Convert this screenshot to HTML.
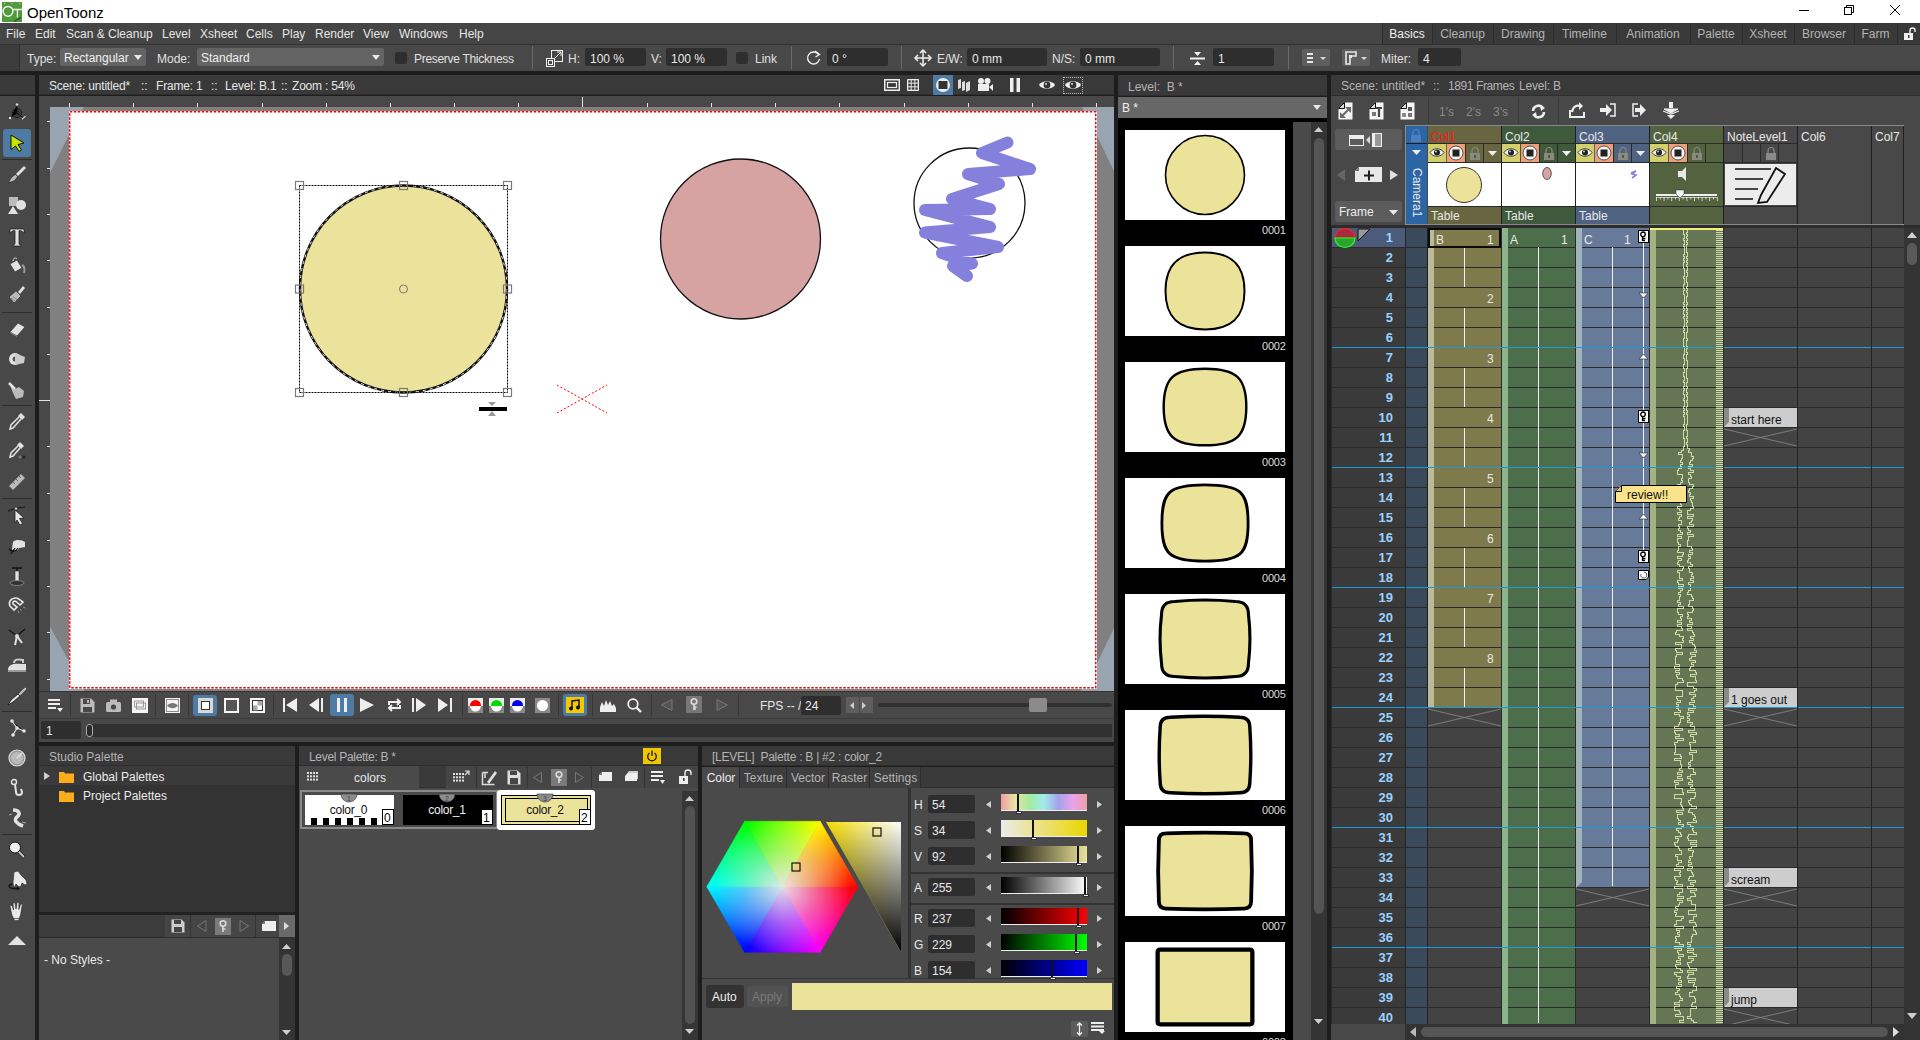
<!DOCTYPE html>
<html><head><meta charset="utf-8"><title>OpenToonz</title>
<style>
html,body{margin:0;padding:0}
body{width:1920px;height:1040px;position:relative;overflow:hidden;background:#1d1d1d;font-family:"Liberation Sans",sans-serif;font-size:12px;color:#e0e0e0}
.a{position:absolute;box-sizing:border-box}
.t{white-space:nowrap;line-height:1}
svg.a{overflow:visible}
</style></head><body>

<div class="a" style="left:0px;top:0px;width:1920px;height:23px;background:#ffffff;"></div><svg class="a" style="left:2px;top:2px;" width="20" height="20" viewBox="0 0 20 20"><rect width="20" height="20" fill="#4f9a3a"/><circle cx="6" cy="9.3" r="4.9" fill="none" stroke="#f6f6f6" stroke-width="1.5"/><path d="M11 7.5H20M15.4 7.5V15.5" stroke="#f2f2f2" stroke-width="1.3" fill="none"/><circle cx="2.6" cy="1.6" r="0.7" fill="#c8c8d0"/><circle cx="9.8" cy="1.6" r="0.7" fill="#c8c8d0"/><circle cx="17.4" cy="1.6" r="0.7" fill="#c8c8d0"/><path d="M12 19.5L19 15.5" stroke="#2f5030" stroke-width="1.4"/></svg><div class="a t" style="left:27px;top:5px;font-size:15px;color:#000000;">OpenToonz</div><div class="a" style="left:1799px;top:10px;width:10px;height:1px;background:#000;"></div><svg class="a" style="left:1844px;top:5px;" width="10" height="10" viewBox="0 0 10 10"><rect x="0.5" y="2.5" width="7" height="7" fill="none" stroke="#000"/><path d="M2.5 2.5V0.5H9.5V7.5H7.5" fill="none" stroke="#000"/></svg><svg class="a" style="left:1890px;top:5px;" width="10" height="10" viewBox="0 0 10 10"><path d="M0 0L10 10M10 0L0 10" stroke="#000" stroke-width="1"/></svg>
<div class="a" style="left:0px;top:23px;width:1920px;height:21px;background:#454545;"></div><div class="a t" style="left:6px;top:28px;font-size:12px;color:#e6e6e6;">File</div><div class="a t" style="left:35px;top:28px;font-size:12px;color:#e6e6e6;">Edit</div><div class="a t" style="left:66px;top:28px;font-size:12px;color:#e6e6e6;">Scan &amp; Cleanup</div><div class="a t" style="left:162px;top:28px;font-size:12px;color:#e6e6e6;">Level</div><div class="a t" style="left:200px;top:28px;font-size:12px;color:#e6e6e6;">Xsheet</div><div class="a t" style="left:246px;top:28px;font-size:12px;color:#e6e6e6;">Cells</div><div class="a t" style="left:282px;top:28px;font-size:12px;color:#e6e6e6;">Play</div><div class="a t" style="left:315px;top:28px;font-size:12px;color:#e6e6e6;">Render</div><div class="a t" style="left:363px;top:28px;font-size:12px;color:#e6e6e6;">View</div><div class="a t" style="left:399px;top:28px;font-size:12px;color:#e6e6e6;">Windows</div><div class="a t" style="left:459px;top:28px;font-size:12px;color:#e6e6e6;">Help</div><div class="a" style="left:1382px;top:23px;width:50px;height:21px;background:#3e3e3e;border-left:1px solid #2c2c2c;"></div><div class="a t" style="left:1382px;top:28px;font-size:12px;color:#f0f0f0;width:50px;text-align:center;">Basics</div><div class="a" style="left:1432px;top:23px;width:61px;height:21px;background:#393939;border-left:1px solid #2c2c2c;"></div><div class="a t" style="left:1432px;top:28px;font-size:12px;color:#b4b4b4;width:61px;text-align:center;">Cleanup</div><div class="a" style="left:1493px;top:23px;width:60px;height:21px;background:#393939;border-left:1px solid #2c2c2c;"></div><div class="a t" style="left:1493px;top:28px;font-size:12px;color:#b4b4b4;width:60px;text-align:center;">Drawing</div><div class="a" style="left:1553px;top:23px;width:63px;height:21px;background:#393939;border-left:1px solid #2c2c2c;"></div><div class="a t" style="left:1553px;top:28px;font-size:12px;color:#b4b4b4;width:63px;text-align:center;">Timeline</div><div class="a" style="left:1616px;top:23px;width:74px;height:21px;background:#393939;border-left:1px solid #2c2c2c;"></div><div class="a t" style="left:1616px;top:28px;font-size:12px;color:#b4b4b4;width:74px;text-align:center;">Animation</div><div class="a" style="left:1690px;top:23px;width:52px;height:21px;background:#393939;border-left:1px solid #2c2c2c;"></div><div class="a t" style="left:1690px;top:28px;font-size:12px;color:#b4b4b4;width:52px;text-align:center;">Palette</div><div class="a" style="left:1742px;top:23px;width:52px;height:21px;background:#393939;border-left:1px solid #2c2c2c;"></div><div class="a t" style="left:1742px;top:28px;font-size:12px;color:#b4b4b4;width:52px;text-align:center;">Xsheet</div><div class="a" style="left:1794px;top:23px;width:60px;height:21px;background:#393939;border-left:1px solid #2c2c2c;"></div><div class="a t" style="left:1794px;top:28px;font-size:12px;color:#b4b4b4;width:60px;text-align:center;">Browser</div><div class="a" style="left:1854px;top:23px;width:43px;height:21px;background:#393939;border-left:1px solid #2c2c2c;"></div><div class="a t" style="left:1854px;top:28px;font-size:12px;color:#b4b4b4;width:43px;text-align:center;">Farm</div><div class="a" style="left:1897px;top:23px;width:23px;height:21px;background:#393939;border-left:1px solid #2c2c2c;"></div><svg class="a" style="left:1903px;top:27px;" width="14" height="14" viewBox="0 0 14 14"><rect x="1" y="6" width="9" height="7" fill="#f0f0f0"/><path d="M7 6V3.5A2.5 2.5 0 0 1 12 3.5V5" fill="none" stroke="#f0f0f0" stroke-width="1.4"/><rect x="5" y="8" width="1.5" height="3" fill="#393939"/></svg>
<div class="a" style="left:0px;top:44px;width:1920px;height:27px;background:#484848;border-top:1px solid #333;"></div><div class="a" style="left:0px;top:45px;width:20px;height:26px;background:#3c3c3c;border-right:1px solid #2e2e2e;"></div><div class="a t" style="left:27px;top:53px;font-size:12px;color:#e0e0e0;">Type:</div><div class="a" style="left:60px;top:48px;width:86px;height:18px;background:#646464;border-radius:2px;"></div><div class="a t" style="left:64px;top:52px;font-size:12px;color:#f0f0f0;">Rectangular</div><svg class="a" style="left:134px;top:55px;" width="8" height="5" viewBox="0 0 8 5"><path d="M0 0H8L4 5Z" fill="#e8e8e8"/></svg><div class="a t" style="left:157px;top:53px;font-size:12px;color:#e0e0e0;">Mode:</div><div class="a" style="left:197px;top:48px;width:187px;height:18px;background:#646464;border-radius:2px;"></div><div class="a t" style="left:201px;top:52px;font-size:12px;color:#f0f0f0;">Standard</div><svg class="a" style="left:372px;top:55px;" width="8" height="5" viewBox="0 0 8 5"><path d="M0 0H8L4 5Z" fill="#e8e8e8"/></svg><div class="a" style="left:395px;top:52px;width:12px;height:12px;background:#2e2e2e;border-radius:2px;"></div><div class="a t" style="left:414px;top:53px;font-size:12px;color:#e0e0e0;letter-spacing:-0.3px;">Preserve Thickness</div><div class="a" style="left:532px;top:46px;width:1px;height:23px;background:#6a6a6a;"></div><div class="a" style="left:791px;top:46px;width:1px;height:23px;background:#6a6a6a;"></div><div class="a" style="left:901px;top:46px;width:1px;height:23px;background:#6a6a6a;"></div><div class="a" style="left:1173px;top:46px;width:1px;height:23px;background:#6a6a6a;"></div><div class="a" style="left:1288px;top:46px;width:1px;height:23px;background:#6a6a6a;"></div><svg class="a" style="left:546px;top:50px;" width="17" height="17" viewBox="0 0 17 17"><rect x="5.5" y="0.5" width="11" height="11" fill="none" stroke="#f0f0f0"/><path d="M7 10L15 2M11 2H15V6" stroke="#f0f0f0" fill="none"/><rect x="0.5" y="8.5" width="8" height="8" fill="#484848" stroke="#f0f0f0"/><rect x="2.5" y="10.5" width="4" height="4" fill="none" stroke="#f0f0f0"/></svg><div class="a t" style="left:568px;top:53px;font-size:12px;color:#e0e0e0;">H:</div><div class="a" style="left:585px;top:48px;width:61px;height:18px;background:#2e2e2e;border-radius:2px;"></div><div class="a t" style="left:590px;top:53px;font-size:12px;color:#e8e8e8;">100 %</div><div class="a t" style="left:651px;top:53px;font-size:12px;color:#e0e0e0;">V:</div><div class="a" style="left:666px;top:48px;width:61px;height:18px;background:#2e2e2e;border-radius:2px;"></div><div class="a t" style="left:671px;top:53px;font-size:12px;color:#e8e8e8;">100 %</div><div class="a" style="left:736px;top:52px;width:12px;height:12px;background:#2e2e2e;border-radius:2px;"></div><div class="a t" style="left:755px;top:53px;font-size:12px;color:#e0e0e0;">Link</div><svg class="a" style="left:806px;top:50px;" width="15" height="16" viewBox="0 0 15 16"><path d="M12.5 4.5A6 6 0 1 0 13.5 9" fill="none" stroke="#f0f0f0" stroke-width="1.4"/><path d="M9 1L13.5 4.5L9.5 7" fill="none" stroke="#f0f0f0" stroke-width="1.3"/></svg><div class="a" style="left:827px;top:48px;width:61px;height:18px;background:#2e2e2e;border-radius:2px;"></div><div class="a t" style="left:832px;top:53px;font-size:12px;color:#e8e8e8;">0 °</div><svg class="a" style="left:914px;top:49px;" width="18" height="18" viewBox="0 0 18 18"><path d="M9 1V17M1 9H17" stroke="#f0f0f0" stroke-width="1.5"/><path d="M6 4L9 1L12 4M6 14L9 17L12 14M4 6L1 9L4 12M14 6L17 9L14 12" fill="none" stroke="#f0f0f0" stroke-width="1.5"/></svg><div class="a t" style="left:937px;top:53px;font-size:12px;color:#e0e0e0;">E/W:</div><div class="a" style="left:967px;top:48px;width:80px;height:18px;background:#2e2e2e;border-radius:2px;"></div><div class="a t" style="left:972px;top:53px;font-size:12px;color:#e8e8e8;">0 mm</div><div class="a t" style="left:1052px;top:53px;font-size:12px;color:#e0e0e0;">N/S:</div><div class="a" style="left:1080px;top:48px;width:80px;height:18px;background:#2e2e2e;border-radius:2px;"></div><div class="a t" style="left:1085px;top:53px;font-size:12px;color:#e8e8e8;">0 mm</div><svg class="a" style="left:1189px;top:50px;" width="17" height="17" viewBox="0 0 17 17"><path d="M1 8.5H16" stroke="#f0f0f0" stroke-width="2"/><path d="M5 2H12L8.5 6Z M5 15H12L8.5 11Z" fill="#f0f0f0"/></svg><div class="a" style="left:1213px;top:48px;width:61px;height:18px;background:#2e2e2e;border-radius:2px;"></div><div class="a t" style="left:1218px;top:53px;font-size:12px;color:#e8e8e8;">1</div><div class="a" style="left:1302px;top:49px;width:28px;height:17px;background:#5e5e5e;border-radius:2px;"></div><svg class="a" style="left:1307px;top:53px;" width="20" height="10" viewBox="0 0 20 10"><path d="M0 1H6M0 5H6M0 9H6" stroke="#e8e8e8" stroke-width="2"/><path d="M13 4H19L16 7Z" fill="#d8d8d8"/></svg><div class="a" style="left:1342px;top:49px;width:28px;height:17px;background:#5e5e5e;border-radius:2px;"></div><svg class="a" style="left:1345px;top:51px;" width="22" height="14" viewBox="0 0 22 14"><path d="M1 13V1H11V5H5V13Z" fill="none" stroke="#e8e8e8" stroke-width="1.6"/><rect x="4" y="4" width="3" height="3" fill="#e8e8e8"/><path d="M16 6H22L19 9Z" fill="#d8d8d8"/></svg><div class="a t" style="left:1381px;top:53px;font-size:12px;color:#e0e0e0;">Miter:</div><div class="a" style="left:1418px;top:48px;width:43px;height:18px;background:#2e2e2e;border-radius:2px;"></div><div class="a t" style="left:1423px;top:53px;font-size:12px;color:#e8e8e8;">4</div>
<div class="a" style="left:0px;top:75px;width:35px;height:20px;background:#3a3a3a;border-bottom:1px solid #2e2e2e;"></div><div class="a" style="left:0px;top:96px;width:35px;height:944px;background:#484848;"></div><div class="a" style="left:3px;top:129px;width:28px;height:28px;background:#4d7ba3;border-radius:3px;"></div><div class="a" style="left:2px;top:159px;width:30px;height:1px;background:#2e2e2e;"></div><div class="a" style="left:2px;top:312px;width:30px;height:1px;background:#2e2e2e;"></div><div class="a" style="left:2px;top:405px;width:30px;height:1px;background:#2e2e2e;"></div><div class="a" style="left:2px;top:498px;width:30px;height:1px;background:#2e2e2e;"></div><div class="a" style="left:2px;top:711px;width:30px;height:1px;background:#2e2e2e;"></div><div class="a" style="left:2px;top:834px;width:30px;height:1px;background:#2e2e2e;"></div><svg class="a" style="left:7px;top:102px;" width="20" height="20" viewBox="0 0 20 20"><circle cx="10" cy="11" r="4.5" fill="none" stroke="#151515" stroke-width="1"/><circle cx="10" cy="11" r="2.2" fill="none" stroke="#151515" stroke-width="0.8"/><path d="M10 3V11L3.5 16M10 11L16.5 16" stroke="#151515" stroke-width="1"/><circle cx="10" cy="2.5" r="1.7" fill="#ddd" stroke="#222" stroke-width="0.6"/><rect x="1.5" y="14.5" width="3" height="3" fill="#ddd" stroke="#222" stroke-width="0.6"/><path d="M14 17L18 13.5L19.5 14.5L15.5 18Z" fill="#ddd" stroke="#222" stroke-width="0.6"/></svg><svg class="a" style="left:7px;top:133px;" width="20" height="20" viewBox="0 0 20 20"><path d="M4 2L17 10L11 11.5L14.5 17L12 18.5L8.5 13L4 16.5Z" fill="#c6e600" stroke="#111" stroke-width="1"/></svg><svg class="a" style="left:7px;top:164px;" width="20" height="20" viewBox="0 0 20 20"><path d="M17 2L19 4L11 12L9 10Z" fill="#e2e2e2"/><path d="M8.5 10.5L10.5 12.5C9 16 6 18 1.5 18.5C3 15.5 5 12 8.5 10.5Z" fill="#bbb" stroke="#222" stroke-width="0.6"/></svg><svg class="a" style="left:7px;top:195px;" width="20" height="20" viewBox="0 0 20 20"><rect x="2" y="2" width="9" height="9" fill="#bbb"/><circle cx="14" cy="10" r="5" fill="#e2e2e2"/><path d="M1 19L6 11L11 19Z" fill="#e2e2e2"/></svg><svg class="a" style="left:7px;top:227px;" width="20" height="20" viewBox="0 0 20 20"><path d="M3 2H17V6H16C15.5 4 15 3.7 12 3.7V16.5C12 17.5 12.5 17.8 14 17.8V19H6V17.8C7.5 17.8 8 17.5 8 16.5V3.7C5 3.7 4.5 4 4 6H3Z" fill="#e2e2e2" stroke="#111" stroke-width="0.7"/></svg><svg class="a" style="left:7px;top:256px;" width="20" height="20" viewBox="0 0 20 20"><path d="M3 8L10 4L15 12L8 16Z" fill="#e2e2e2" stroke="#222" stroke-width="0.6"/><path d="M6 5C6 2 9 1 10 3" fill="none" stroke="#e2e2e2"/><path d="M15 9C17 10 18 13 17 17" stroke="#999" stroke-width="2" fill="none"/></svg><svg class="a" style="left:7px;top:285px;" width="20" height="20" viewBox="0 0 20 20"><path d="M16 1L18 3L13 9L11 7Z" fill="#e2e2e2"/><path d="M2 12L9 6L14 11L7 18Z" fill="#bbb" stroke="#222" stroke-width="0.6"/><path d="M4 13L9 17M6 11.5L11 15.5" stroke="#777" stroke-width="0.8"/></svg><svg class="a" style="left:7px;top:319px;" width="20" height="20" viewBox="0 0 20 20"><path d="M3 13L11 4L18 8L10 17Z" fill="#e2e2e2" stroke="#222" stroke-width="0.6"/><path d="M3 13L10 17L10 18L3 14Z" fill="#888"/></svg><svg class="a" style="left:7px;top:349px;" width="20" height="20" viewBox="0 0 20 20"><ellipse cx="8" cy="10" rx="6" ry="6" fill="#e2e2e2"/><ellipse cx="8" cy="10" rx="2.5" ry="2.5" fill="#555"/><path d="M8 4L18 8L17 14L8 16" fill="#ccc"/></svg><svg class="a" style="left:7px;top:380px;" width="20" height="20" viewBox="0 0 20 20"><path d="M2 3L8 9L12 7L17 11L16 17L9 19L6 13Z" fill="#bbb"/><path d="M2 3L8 9" stroke="#e2e2e2" stroke-width="2.5"/></svg><svg class="a" style="left:7px;top:411px;" width="20" height="20" viewBox="0 0 20 20"><path d="M14 2L18 6L15 9L11 5Z" fill="#e2e2e2"/><path d="M12 6L4 14L3 18L6 17L14 8" fill="none" stroke="#e2e2e2" stroke-width="1.5"/></svg><svg class="a" style="left:7px;top:441px;" width="20" height="20" viewBox="0 0 20 20"><path d="M13 1L17 5L14 8L10 4Z" fill="#e2e2e2"/><path d="M11 5L4 12L3 16L6 15L13 7" fill="none" stroke="#e2e2e2" stroke-width="1.5"/><circle cx="13" cy="16" r="1.6" fill="#777"/><circle cx="17" cy="16" r="1.6" fill="#222"/></svg><svg class="a" style="left:7px;top:472px;" width="20" height="20" viewBox="0 0 20 20"><path d="M2 14L14 2L18 6L6 18Z" fill="#bbb" stroke="#777" stroke-width="0.6"/><path d="M6 10L8 12M9 7L11 9M12 4L14 6" stroke="#666"/></svg><svg class="a" style="left:7px;top:506px;" width="20" height="20" viewBox="0 0 20 20"><path d="M1 5L9 2L18 1" fill="none" stroke="#151515" stroke-width="1.2"/><circle cx="9" cy="2.5" r="1.5" fill="#ddd" stroke="#151515" stroke-width="0.6"/><path d="M8 4L17 12L12.5 12.5L15.5 17.5L13 19L10 14L8 17Z" fill="#e6e6e6" stroke="#151515" stroke-width="0.7"/></svg><svg class="a" style="left:7px;top:536px;" width="20" height="20" viewBox="0 0 20 20"><path d="M6 6C9 3 15 4 18 6L18 11L12 12C10 16 6 16 5 13Z" fill="#e2e2e2"/><path d="M2 13C5 16 9 16 11 12M4 18L8 12" stroke="#111" stroke-width="1.3" fill="none"/></svg><svg class="a" style="left:7px;top:566px;" width="20" height="20" viewBox="0 0 20 20"><path d="M5 2H15M10 2V5" stroke="#111" stroke-width="1.4"/><rect x="8" y="5" width="4" height="10" fill="#e2e2e2" stroke="#333" stroke-width="0.6"/><ellipse cx="10" cy="17" rx="7" ry="2.5" fill="#333" stroke="#aaa" stroke-width="0.6"/></svg><svg class="a" style="left:7px;top:595px;" width="20" height="20" viewBox="0 0 20 20"><path d="M9 3C4 3 1 7 3 11L7 15L10 12L6 9C5 7 7 5.5 9 6.5L13 10L16 7L11 3.5C10.5 3.2 9.8 3 9 3Z" fill="none" stroke="#e6e6e6" stroke-width="1.6"/><path d="M13 14L15 16M11 15.5L12 18.5M16 12L18.5 13" stroke="#999" stroke-width="0.8"/></svg><svg class="a" style="left:7px;top:626px;" width="20" height="20" viewBox="0 0 20 20"><path d="M2 4L10 10L18 3" stroke="#111" stroke-width="1.2" fill="none"/><path d="M10 10L8 19M10 10L15 17" stroke="#e2e2e2" stroke-width="2"/><circle cx="10" cy="10" r="2" fill="#ddd"/></svg><svg class="a" style="left:7px;top:655px;" width="20" height="20" viewBox="0 0 20 20"><path d="M1 15C1 9 8 8 14 9L19 9L19 15Z" fill="#e2e2e2"/><path d="M7 8C7 4 12 4 16 5L16 8" fill="none" stroke="#ccc" stroke-width="2"/><rect x="1" y="15" width="18" height="2" fill="#999"/></svg><svg class="a" style="left:7px;top:686px;" width="20" height="20" viewBox="0 0 20 20"><path d="M18 1L20 3L13 10L11 8Z" fill="#bbb" stroke="#222" stroke-width="0.5"/><path d="M11 8L13 10L6 16L1 19L4 14Z" fill="#e6e6e6" stroke="#111" stroke-width="0.8"/></svg><svg class="a" style="left:7px;top:718px;" width="20" height="20" viewBox="0 0 20 20"><path d="M5 3L10 10L17 13M10 10L6 17" stroke="#e2e2e2" stroke-width="1.2"/><circle cx="5" cy="3" r="1.8" fill="#e2e2e2"/><circle cx="10" cy="10" r="1.8" fill="#e2e2e2"/><circle cx="17" cy="13" r="1.8" fill="#e2e2e2"/><circle cx="6" cy="17" r="1.8" fill="#e2e2e2"/></svg><svg class="a" style="left:7px;top:748px;" width="20" height="20" viewBox="0 0 20 20"><circle cx="10" cy="10" r="8" fill="#999" stroke="#ddd" stroke-width="1.2"/><circle cx="10" cy="10" r="6" fill="#bbb"/><path d="M10 10L15 5" stroke="#e2e2e2" stroke-width="1.5"/></svg><svg class="a" style="left:7px;top:778px;" width="20" height="20" viewBox="0 0 20 20"><circle cx="7" cy="4" r="2.5" fill="none" stroke="#e2e2e2" stroke-width="1.4"/><path d="M8 6L9 14C9 18 15 18 15 14L14 11" fill="none" stroke="#e2e2e2" stroke-width="2"/></svg><svg class="a" style="left:7px;top:808px;" width="20" height="20" viewBox="0 0 20 20"><path d="M6 2C12 2 14 6 10 9C6 12 10 16 16 18" fill="none" stroke="#e2e2e2" stroke-width="3.5"/><path d="M2 7L5 6M15 14L19 15" stroke="#aaa"/></svg><svg class="a" style="left:7px;top:840px;" width="20" height="20" viewBox="0 0 20 20"><path d="M11 11L17.5 17.5" stroke="#222" stroke-width="3.2"/><path d="M11 11L17 17" stroke="#ccc" stroke-width="1.8"/><circle cx="8" cy="7.5" r="5.5" fill="#eee" stroke="#111" stroke-width="1"/></svg><svg class="a" style="left:7px;top:870px;" width="20" height="20" viewBox="0 0 20 20"><path d="M7 2L11 1L14 5L19 10L20 14L18 15L15 13L14 16L12 17L9 14L7 18L6 13Z" fill="#e8e8e8" stroke="#222" stroke-width="0.6"/><path d="M5 14C1 15 1 18 6 18.5L11 18.5" fill="none" stroke="#111" stroke-width="1.3"/><path d="M10 16.5L13 18.5L10 20.5Z" fill="#111"/></svg><svg class="a" style="left:7px;top:901px;" width="20" height="20" viewBox="0 0 20 20"><path d="M4 10L3 5C3 4 5 4 5.2 5L6.5 9L6 2.5C6 1.5 8 1.5 8.2 2.5L9 8L10 1.8C10.2 0.8 12 1 12 2L11.8 8.5L13.5 3.5C14 2.5 15.5 3 15.3 4L14 11C14 13 13 16 12 18H7C5.5 16 4.5 13 4 10Z" fill="#e8e8e8" stroke="#222" stroke-width="0.6"/><rect x="7" y="17.5" width="5" height="2" fill="#ddd" stroke="#222" stroke-width="0.5"/></svg><svg class="a" style="left:7px;top:929px;" width="20" height="20" viewBox="0 0 20 20"><path d="M1 16H19L10 7Z" fill="#e2e2e2"/></svg>
<div class="a" style="left:39px;top:75px;width:1075px;height:20px;background:#393939;border-bottom:1px solid #2e2e2e;"></div><div class="a t" style="left:49px;top:80px;font-size:12px;color:#e6e6e6;letter-spacing:-0.2px;">Scene: untitled*</div><div class="a t" style="left:141px;top:80px;font-size:12px;color:#e6e6e6;letter-spacing:-0.2px;">::</div><div class="a t" style="left:156px;top:80px;font-size:12px;color:#e6e6e6;letter-spacing:-0.2px;">Frame: 1</div><div class="a t" style="left:211px;top:80px;font-size:12px;color:#e6e6e6;letter-spacing:-0.2px;">::</div><div class="a t" style="left:225px;top:80px;font-size:12px;color:#e6e6e6;letter-spacing:-0.2px;">Level: B.1</div><div class="a t" style="left:281px;top:80px;font-size:12px;color:#e6e6e6;letter-spacing:-0.2px;">::</div><div class="a t" style="left:292px;top:80px;font-size:12px;color:#e6e6e6;letter-spacing:-0.2px;">Zoom : 54%</div><svg class="a" style="left:884px;top:79px;" width="16" height="12" viewBox="0 0 16 12"><rect x="0.75" y="0.75" width="14.5" height="10.5" fill="none" stroke="#eee" stroke-width="1.5"/><rect x="3.5" y="3.5" width="9" height="5" fill="none" stroke="#eee" stroke-width="1.2"/></svg><svg class="a" style="left:907px;top:79px;" width="12" height="12" viewBox="0 0 12 12"><path d="M0.5 0.5H11.5V11.5H0.5Z M4.17 0.5V11.5 M7.83 0.5V11.5 M0.5 4.17H11.5 M0.5 7.83H11.5" fill="none" stroke="#eee" stroke-width="1"/><rect x="1" y="1" width="10" height="10" fill="none" stroke="#eee" stroke-width="0.6" stroke-dasharray="0"/></svg><div class="a" style="left:933px;top:75px;width:20px;height:20px;background:#4d7ba3;"></div><svg class="a" style="left:935px;top:77px;" width="16" height="16" viewBox="0 0 16 16"><circle cx="8" cy="8" r="7" fill="#eee"/><rect x="3.5" y="4" width="9" height="8" fill="#333"/></svg><svg class="a" style="left:957px;top:78px;" width="15" height="14" viewBox="0 0 15 14"><path d="M1 2L4 1V10L1 11Z M5 4L8 3V12L5 13Z M9 5L13 3V12L9 14Z" fill="#ddd"/></svg><svg class="a" style="left:977px;top:78px;" width="16" height="14" viewBox="0 0 16 14"><circle cx="4" cy="3" r="3" fill="#eee"/><circle cx="10.5" cy="3" r="3" fill="#eee"/><rect x="1" y="6" width="11" height="7" fill="#eee"/><path d="M12 9L16 6V13Z" fill="#eee"/></svg><svg class="a" style="left:1010px;top:78px;" width="10" height="14" viewBox="0 0 10 14"><rect x="0" y="0" width="3.5" height="14" fill="#eee"/><rect x="6.5" y="0" width="3.5" height="14" fill="#eee"/></svg><svg class="a" style="left:1038px;top:79px;" width="18" height="12" viewBox="0 0 18 12"><path d="M1 6C4 1 14 1 17 6C14 11 4 11 1 6Z" fill="#f0f0f0"/><circle cx="9" cy="6" r="3.4" fill="#333"/><circle cx="8" cy="5" r="1" fill="#ddd"/></svg><div class="a" style="left:1063px;top:77px;width:20px;height:17px;border:1px dotted #bbb;"></div><svg class="a" style="left:1064px;top:79px;" width="18" height="12" viewBox="0 0 18 12"><path d="M1 6C4 1 14 1 17 6C14 11 4 11 1 6Z" fill="#f0f0f0"/><circle cx="9" cy="6" r="3.4" fill="#333"/><circle cx="8" cy="5" r="1" fill="#ddd"/></svg><div class="a" style="left:39px;top:96px;width:1075px;height:11px;background:#484848;"></div><div class="a" style="left:39px;top:107px;width:11px;height:585px;background:#484848;"></div><div class="a" style="left:69px;top:103px;width:1px;height:4px;background:#e6e6e6;"></div><div class="a" style="left:133px;top:103px;width:1px;height:4px;background:#e6e6e6;"></div><div class="a" style="left:197px;top:103px;width:1px;height:4px;background:#e6e6e6;"></div><div class="a" style="left:262px;top:103px;width:1px;height:4px;background:#e6e6e6;"></div><div class="a" style="left:326px;top:103px;width:1px;height:4px;background:#e6e6e6;"></div><div class="a" style="left:390px;top:103px;width:1px;height:4px;background:#e6e6e6;"></div><div class="a" style="left:454px;top:103px;width:1px;height:4px;background:#e6e6e6;"></div><div class="a" style="left:518px;top:103px;width:1px;height:4px;background:#e6e6e6;"></div><div class="a" style="left:582px;top:97px;width:1px;height:10px;background:#e6e6e6;"></div><div class="a" style="left:647px;top:103px;width:1px;height:4px;background:#e6e6e6;"></div><div class="a" style="left:711px;top:103px;width:1px;height:4px;background:#e6e6e6;"></div><div class="a" style="left:775px;top:103px;width:1px;height:4px;background:#e6e6e6;"></div><div class="a" style="left:839px;top:103px;width:1px;height:4px;background:#e6e6e6;"></div><div class="a" style="left:904px;top:103px;width:1px;height:4px;background:#e6e6e6;"></div><div class="a" style="left:968px;top:103px;width:1px;height:4px;background:#e6e6e6;"></div><div class="a" style="left:1032px;top:103px;width:1px;height:4px;background:#e6e6e6;"></div><div class="a" style="left:1096px;top:103px;width:1px;height:4px;background:#e6e6e6;"></div><div class="a" style="left:47px;top:121px;width:3px;height:1px;background:#e6e6e6;"></div><div class="a" style="left:47px;top:168px;width:3px;height:1px;background:#e6e6e6;"></div><div class="a" style="left:47px;top:214px;width:3px;height:1px;background:#e6e6e6;"></div><div class="a" style="left:47px;top:260px;width:3px;height:1px;background:#e6e6e6;"></div><div class="a" style="left:47px;top:307px;width:3px;height:1px;background:#e6e6e6;"></div><div class="a" style="left:47px;top:354px;width:3px;height:1px;background:#e6e6e6;"></div><div class="a" style="left:39px;top:400px;width:11px;height:1px;background:#e6e6e6;"></div><div class="a" style="left:47px;top:446px;width:3px;height:1px;background:#e6e6e6;"></div><div class="a" style="left:47px;top:493px;width:3px;height:1px;background:#e6e6e6;"></div><div class="a" style="left:47px;top:540px;width:3px;height:1px;background:#e6e6e6;"></div><div class="a" style="left:47px;top:586px;width:3px;height:1px;background:#e6e6e6;"></div><div class="a" style="left:47px;top:632px;width:3px;height:1px;background:#e6e6e6;"></div><div class="a" style="left:47px;top:679px;width:3px;height:1px;background:#e6e6e6;"></div><div class="a" style="left:50px;top:107px;width:1064px;height:585px;background:#808080;"></div><svg class="a" style="left:50px;top:107px;" width="1064" height="585" viewBox="0 0 1064 585"><path d="M0 0H34L32 4H19V28L0 66Z" fill="#98a4b0"/><path d="M1064 0H1032L1034 4H1047V29L1064 64Z" fill="#98a4b0"/><path d="M0 519.5L19 554.5V582H33L35 584H0Z" fill="#98a4b0"/><path d="M1064 521L1047 556V582H1032L1030 584H1064Z" fill="#98a4b0"/></svg><div class="a" style="left:69px;top:111px;width:1028px;height:578px;background:#ffffff;"></div><svg class="a" style="left:69px;top:111px;" width="1028" height="578" viewBox="0 0 1028 578"><rect x="0.75" y="0.75" width="1026" height="576" fill="none" stroke="#ff0000" stroke-width="1.5" stroke-dasharray="2.5 1.5"/></svg><svg class="a" style="left:0px;top:0px;pointer-events:none;" width="1920" height="1040" viewBox="0 0 1920 1040"><circle cx="740.5" cy="239" r="80" fill="#d6a2a2" stroke="#111" stroke-width="1.3"/><ellipse cx="969.5" cy="203" rx="55.5" ry="55" fill="none" stroke="#111" stroke-width="1.3"/><path d="M1007.5 142.5 L982 153 L1030 169 L968 174 L999 184 L952 199 L990 209 L925 210 L990 227 L925 232.5 L998 247 L942 253 L972 263.5 L953 266 L967 276" fill="none" stroke="#8480dc" stroke-width="12" stroke-linecap="round" stroke-linejoin="round"/><circle cx="403.5" cy="289" r="103.5" fill="#ebe39c" stroke="#111" stroke-width="2.4"/><circle cx="403.5" cy="289" r="103.5" fill="none" stroke="#fff" stroke-width="0.9" stroke-dasharray="3 4"/><rect x="299.5" y="185.5" width="208" height="207" fill="none" stroke="#000" stroke-width="1" stroke-dasharray="2 1"/><rect x="295.5" y="181.5" width="8" height="8" fill="none" stroke="#7a7a7a" stroke-width="1.2"/><rect x="295.5" y="285" width="8" height="8" fill="none" stroke="#7a7a7a" stroke-width="1.2"/><rect x="295.5" y="388.5" width="8" height="8" fill="none" stroke="#7a7a7a" stroke-width="1.2"/><rect x="399.5" y="181.5" width="8" height="8" fill="none" stroke="#7a7a7a" stroke-width="1.2"/><rect x="399.5" y="388.5" width="8" height="8" fill="none" stroke="#7a7a7a" stroke-width="1.2"/><rect x="503.5" y="181.5" width="8" height="8" fill="none" stroke="#7a7a7a" stroke-width="1.2"/><rect x="503.5" y="285" width="8" height="8" fill="none" stroke="#7a7a7a" stroke-width="1.2"/><rect x="503.5" y="388.5" width="8" height="8" fill="none" stroke="#7a7a7a" stroke-width="1.2"/><circle cx="403.5" cy="289" r="4" fill="none" stroke="#777" stroke-width="1"/><rect x="479" y="407" width="28" height="4" fill="#000"/><path d="M488 402H496L492 406Z M488 416H496L492 411Z" fill="#999"/><path d="M557 385L607 413M557 413L607 385" stroke="#ff0000" stroke-width="1" stroke-dasharray="2 2"/></svg><div class="a" style="left:39px;top:691px;width:1075px;height:1px;background:#333;"></div><div class="a" style="left:39px;top:692px;width:1075px;height:26px;background:#484848;"></div><div class="a" style="left:70px;top:694px;width:1px;height:22px;background:#363636;"></div><div class="a" style="left:155px;top:694px;width:1px;height:22px;background:#363636;"></div><div class="a" style="left:188px;top:694px;width:1px;height:22px;background:#363636;"></div><div class="a" style="left:273px;top:694px;width:1px;height:22px;background:#363636;"></div><div class="a" style="left:462px;top:694px;width:1px;height:22px;background:#363636;"></div><div class="a" style="left:558px;top:694px;width:1px;height:22px;background:#363636;"></div><div class="a" style="left:592px;top:694px;width:1px;height:22px;background:#363636;"></div><div class="a" style="left:651px;top:694px;width:1px;height:22px;background:#363636;"></div><div class="a" style="left:738px;top:694px;width:1px;height:22px;background:#363636;"></div><svg class="a" style="left:47px;top:698px;" width="17" height="15" viewBox="0 0 17 15"><path d="M1 2H13M1 6H13M1 10H9" stroke="#eee" stroke-width="2"/><path d="M10 10H16L13 14Z" fill="#eee"/></svg><svg class="a" style="left:80px;top:698px;" width="15" height="15" viewBox="0 0 15 15"><path d="M0.5 0.5H11L14.5 4V14.5H0.5Z" fill="#bbb"/><rect x="3" y="1" width="7" height="5" fill="#484848"/><rect x="7" y="2" width="2" height="3" fill="#bbb"/><rect x="3" y="9" width="9" height="5" fill="#484848"/></svg><svg class="a" style="left:106px;top:699px;" width="15" height="13" viewBox="0 0 15 13"><rect x="0" y="3" width="15" height="10" rx="1.5" fill="#bbb"/><rect x="4" y="0.5" width="7" height="3" fill="#bbb"/><circle cx="7.5" cy="8" r="2.6" fill="#484848"/></svg><svg class="a" style="left:132px;top:698px;" width="16" height="15" viewBox="0 0 16 15"><rect x="0" y="0" width="16" height="15" fill="#f4f4f4"/><rect x="2.5" y="3" width="9" height="6" fill="none" stroke="#999"/><rect x="4.5" y="5" width="9" height="6" fill="none" stroke="#999"/></svg><svg class="a" style="left:165px;top:698px;" width="15" height="15" viewBox="0 0 15 15"><rect x="0" y="0" width="15" height="15" fill="#f4f4f4"/><rect x="1.5" y="1.5" width="12" height="12" fill="none" stroke="#222" stroke-dasharray="1 1"/><path d="M2 7.5C5 4 10 4 13 7.5C10 11 5 11 2 7.5Z" fill="#777"/></svg><div class="a" style="left:193px;top:695px;width:24px;height:21px;background:#4d7ba3;border-radius:3px;"></div><div class="a" style="left:198px;top:698px;width:15px;height:15px;background:#d8d8d8;"></div><div class="a" style="left:201px;top:701px;width:9px;height:9px;background:#fff;border:1px solid #333;"></div><div class="a" style="left:224px;top:698px;width:15px;height:15px;background:#f4f4f4;"></div><div class="a" style="left:226px;top:700px;width:11px;height:11px;background:#555;"></div><div class="a" style="left:250px;top:698px;width:15px;height:15px;background:#f4f4f4;"></div><svg class="a" style="left:252px;top:700px;" width="11" height="11" viewBox="0 0 11 11"><rect x="0.5" y="0.5" width="10" height="10" fill="#fff" stroke="#333"/><rect x="5.5" y="1" width="5" height="4.5" fill="#aaa"/><rect x="1" y="5.5" width="4.5" height="5" fill="#aaa"/></svg><svg class="a" style="left:283px;top:698px;" width="14" height="14" viewBox="0 0 14 14"><rect x="0" y="0" width="2" height="14" fill="#eee"/><path d="M14 0V14L3 7Z" fill="#eee"/></svg><svg class="a" style="left:309px;top:698px;" width="14" height="14" viewBox="0 0 14 14"><path d="M10 0V14L0 7Z" fill="#eee"/><rect x="12" y="0" width="2" height="14" fill="#eee"/></svg><div class="a" style="left:330px;top:694px;width:24px;height:22px;background:#4d7ba3;border-radius:3px;"></div><svg class="a" style="left:336px;top:698px;" width="12" height="14" viewBox="0 0 12 14"><rect x="1" y="0" width="3" height="14" fill="#eee"/><rect x="8" y="0" width="3" height="14" fill="#eee"/></svg><svg class="a" style="left:360px;top:698px;" width="14" height="14" viewBox="0 0 14 14"><path d="M0 0V14L14 7Z" fill="#eee"/></svg><svg class="a" style="left:387px;top:698px;" width="15" height="14" viewBox="0 0 15 14"><path d="M2 7V4H12M10 1L13 4L10 7M13 7V10H3M5 7L2 10L5 13" fill="none" stroke="#eee" stroke-width="2"/></svg><svg class="a" style="left:412px;top:698px;" width="14" height="14" viewBox="0 0 14 14"><rect x="0" y="0" width="2" height="14" fill="#eee"/><path d="M4 0V14L14 7Z" fill="#eee"/></svg><svg class="a" style="left:438px;top:698px;" width="14" height="14" viewBox="0 0 14 14"><path d="M0 0V14L10 7Z" fill="#eee"/><rect x="12" y="0" width="2" height="14" fill="#eee"/></svg><svg class="a" style="left:468px;top:698px;" width="15" height="15" viewBox="0 0 15 15"><rect x="0" y="0" width="15" height="15" fill="#ededed"/><rect x="0" y="8" width="15" height="7" fill="#888"/><circle cx="7.5" cy="7.5" r="5.5" fill="#ff0000"/><path d="M2 8A5.5 5.5 0 0 0 13 8Z" fill="#fff"/></svg><svg class="a" style="left:489px;top:698px;" width="15" height="15" viewBox="0 0 15 15"><rect x="0" y="0" width="15" height="15" fill="#ededed"/><rect x="0" y="8" width="15" height="7" fill="#888"/><circle cx="7.5" cy="7.5" r="5.5" fill="#00dd00"/><path d="M2 8A5.5 5.5 0 0 0 13 8Z" fill="#fff"/></svg><svg class="a" style="left:510px;top:698px;" width="15" height="15" viewBox="0 0 15 15"><rect x="0" y="0" width="15" height="15" fill="#ededed"/><rect x="0" y="8" width="15" height="7" fill="#888"/><circle cx="7.5" cy="7.5" r="5.5" fill="#0000ee"/><path d="M2 8A5.5 5.5 0 0 0 13 8Z" fill="#fff"/></svg><svg class="a" style="left:535px;top:698px;" width="15" height="15" viewBox="0 0 15 15"><rect width="15" height="15" fill="#8a8a8a"/><circle cx="7.5" cy="7.5" r="5.5" fill="#fff"/></svg><div class="a" style="left:563px;top:694px;width:24px;height:22px;background:#4d7ba3;border-radius:3px;"></div><svg class="a" style="left:566px;top:697px;" width="18" height="16" viewBox="0 0 18 16"><rect width="18" height="16" fill="#f5c800"/><path d="M6 11V4L13 3V10" stroke="#111" stroke-width="1.5" fill="none"/><circle cx="5" cy="11.5" r="2" fill="#111"/><circle cx="12" cy="10.5" r="2" fill="#111"/></svg><svg class="a" style="left:600px;top:698px;" width="16" height="14" viewBox="0 0 16 14"><path d="M0 14V9L2 4L4 8L6 2L8 7L10 3L12 8L14 6L16 10V14Z" fill="#eee"/></svg><svg class="a" style="left:627px;top:698px;" width="15" height="15" viewBox="0 0 15 15"><circle cx="6" cy="6" r="4.8" fill="none" stroke="#eee" stroke-width="1.8"/><path d="M9.5 9.5L14 14" stroke="#eee" stroke-width="2.4"/></svg><svg class="a" style="left:661px;top:699px;" width="12" height="12" viewBox="0 0 12 12"><path d="M11 0.5V11.5L0.5 6Z" fill="#555" stroke="#777" stroke-width="1"/></svg><div class="a" style="left:686px;top:696px;width:16px;height:17px;background:#777;border-radius:1px;"></div><svg class="a" style="left:689px;top:698px;" width="10" height="13" viewBox="0 0 10 13"><circle cx="5" cy="3.5" r="2.8" fill="none" stroke="#ddd" stroke-width="1.6"/><path d="M5 6V12M5 9H7.5M5 11H7" stroke="#ddd" stroke-width="1.6"/></svg><svg class="a" style="left:716px;top:699px;" width="12" height="12" viewBox="0 0 12 12"><path d="M1 0.5V11.5L11.5 6Z" fill="#555" stroke="#777" stroke-width="1"/></svg><div class="a t" style="left:760px;top:700px;font-size:12px;color:#e6e6e6;">FPS -- /</div><div class="a" style="left:801px;top:696px;width:40px;height:19px;background:#2e2e2e;border-radius:2px;"></div><div class="a t" style="left:805px;top:700px;font-size:12px;color:#eaeaea;">24</div><div class="a" style="left:846px;top:697px;width:13px;height:16px;background:#5e5e5e;"></div><div class="a" style="left:860px;top:697px;width:13px;height:16px;background:#5e5e5e;"></div><svg class="a" style="left:850px;top:702px;" width="20" height="7" viewBox="0 0 20 7"><path d="M4 0V7L0 3.5Z M12 0V7L16 3.5Z" fill="#ccc"/></svg><div class="a" style="left:878px;top:703px;width:234px;height:4px;background:#303030;border-radius:2px;"></div><div class="a" style="left:1029px;top:698px;width:18px;height:14px;background:#8a8a8a;border-radius:2px;"></div><div class="a" style="left:39px;top:718px;width:1075px;height:24px;background:#484848;border-top:1px solid #3c3c3c;"></div><div class="a" style="left:41px;top:721px;width:40px;height:18px;background:#2e2e2e;border-radius:2px;"></div><div class="a t" style="left:46px;top:725px;font-size:12px;color:#e8e8e8;">1</div><div class="a" style="left:86px;top:724px;width:1026px;height:13px;background:#303030;"></div><div class="a" style="left:86px;top:724px;width:7px;height:13px;background:#2a2a2a;border:1px solid #aaa;border-radius:3px;"></div>
<div class="a" style="left:1118px;top:75px;width:209px;height:21px;background:#393939;border-bottom:1px solid #2e2e2e;"></div><div class="a t" style="left:1128px;top:81px;font-size:12px;color:#b4b4b4;">Level:&nbsp; B *</div><div class="a" style="left:1118px;top:97px;width:209px;height:21px;background:#676767;"></div><div class="a t" style="left:1122px;top:102px;font-size:12px;color:#f0f0f0;">B *</div><svg class="a" style="left:1313px;top:105px;" width="8" height="5" viewBox="0 0 8 5"><path d="M0 0H8L4 5Z" fill="#e8e8e8"/></svg><div class="a" style="left:1118px;top:118px;width:175px;height:922px;background:#000000;"></div><div class="a" style="left:1293px;top:118px;width:34px;height:4px;background:#000000;"></div><div class="a" style="left:1293px;top:122px;width:18px;height:918px;background:#4a4a4a;"></div><div class="a" style="left:1311px;top:122px;width:16px;height:918px;background:#343434;"></div><svg class="a" style="left:1314px;top:127px;" width="9" height="5" viewBox="0 0 9 5"><path d="M0 5H9L4.5 0Z" fill="#cfcfcf"/></svg><div class="a" style="left:1314px;top:138px;width:10px;height:776px;background:#545454;border-radius:5px;"></div><svg class="a" style="left:1314px;top:1019px;" width="9" height="5" viewBox="0 0 9 5"><path d="M0 0H9L4.5 5Z" fill="#cfcfcf"/></svg><svg class="a" style="left:0px;top:0px;" width="1920" height="1040" viewBox="0 0 1920 1040"><rect x="1125" y="130" width="160" height="90" fill="#fff"/><circle cx="1205" cy="175" r="39.5" fill="#ebe39a" stroke="#000" stroke-width="1.6"/><rect x="1125" y="246" width="160" height="90" fill="#fff"/><path d="M1205 252.5 C1231.86 252.5 1244.5 264.82 1244.5 291 C1244.5 317.18 1231.86 329.5 1205 329.5 C1178.14 329.5 1165.5 317.18 1165.5 291 C1165.5 264.82 1178.14 252.5 1205 252.5Z" fill="#ebe39a" stroke="#000" stroke-width="2.0"/><rect x="1125" y="362" width="160" height="90" fill="#fff"/><path d="M1205 368.7 C1236.388 368.7 1246.3 377.892 1246.3 407 C1246.3 436.108 1236.388 445.3 1205 445.3 C1173.612 445.3 1163.7 436.108 1163.7 407 C1163.7 377.892 1173.612 368.7 1205 368.7Z" fill="#ebe39a" stroke="#000" stroke-width="2.4"/><rect x="1125" y="478" width="160" height="90" fill="#fff"/><path d="M1205 484.9 C1240.773 484.9 1248.1 491.377 1248.1 523 C1248.1 554.623 1240.773 561.1 1205 561.1 C1169.227 561.1 1161.9 554.623 1161.9 523 C1161.9 491.377 1169.227 484.9 1205 484.9Z" fill="#ebe39a" stroke="#000" stroke-width="2.8"/><rect x="1125" y="594" width="160" height="90" fill="#fff"/><path d="M1174.55 601.55 Q1205 598.55 1235.45 601.55 Q1248.45 601.55 1248.45 614.55 Q1251.45 639 1248.45 663.45 Q1248.45 676.45 1235.45 676.45 Q1205 679.45 1174.55 676.45 Q1161.55 676.45 1161.55 663.45 Q1158.55 639 1161.55 614.55 Q1161.55 601.55 1174.55 601.55Z" fill="#ebe39a" stroke="#000" stroke-width="3.1" stroke-linejoin="round"/><rect x="1125" y="710" width="160" height="90" fill="#fff"/><path d="M1170.2 717.2 Q1205 715.2 1239.8 717.2 Q1249.8 717.2 1249.8 727.2 Q1251.8 755 1249.8 782.8 Q1249.8 792.8 1239.8 792.8 Q1205 794.8 1170.2 792.8 Q1160.2 792.8 1160.2 782.8 Q1158.2 755 1160.2 727.2 Q1160.2 717.2 1170.2 717.2Z" fill="#ebe39a" stroke="#000" stroke-width="3.4" stroke-linejoin="round"/><rect x="1125" y="826" width="160" height="90" fill="#fff"/><path d="M1165.9 833.4 Q1205 831.9 1244.1 833.4 Q1251.1 833.4 1251.1 840.4 Q1252.6 871 1251.1 901.6 Q1251.1 908.6 1244.1 908.6 Q1205 910.1 1165.9 908.6 Q1158.9 908.6 1158.9 901.6 Q1157.4 871 1158.9 840.4 Q1158.9 833.4 1165.9 833.4Z" fill="#ebe39a" stroke="#000" stroke-width="3.8" stroke-linejoin="round"/><rect x="1125" y="942" width="160" height="90" fill="#fff"/><path d="M1160.15 949.65 Q1205 949.65 1249.85 949.65 Q1252.35 949.65 1252.35 952.15 Q1252.35 987 1252.35 1021.8499999999999 Q1252.35 1024.35 1249.85 1024.35 Q1205 1024.35 1160.15 1024.35 Q1157.65 1024.35 1157.65 1021.8499999999999 Q1157.65 987 1157.65 952.15 Q1157.65 949.65 1160.15 949.65Z" fill="#ebe39a" stroke="#000" stroke-width="4.3" stroke-linejoin="round"/></svg><div class="a t" style="left:1262px;top:225px;font-size:11px;color:#dcdcdc;letter-spacing:-0.2px;">0001</div><div class="a t" style="left:1262px;top:341px;font-size:11px;color:#dcdcdc;letter-spacing:-0.2px;">0002</div><div class="a t" style="left:1262px;top:457px;font-size:11px;color:#dcdcdc;letter-spacing:-0.2px;">0003</div><div class="a t" style="left:1262px;top:573px;font-size:11px;color:#dcdcdc;letter-spacing:-0.2px;">0004</div><div class="a t" style="left:1262px;top:689px;font-size:11px;color:#dcdcdc;letter-spacing:-0.2px;">0005</div><div class="a t" style="left:1262px;top:805px;font-size:11px;color:#dcdcdc;letter-spacing:-0.2px;">0006</div><div class="a t" style="left:1262px;top:921px;font-size:11px;color:#dcdcdc;letter-spacing:-0.2px;">0007</div><div class="a t" style="left:1262px;top:1037px;font-size:11px;color:#dcdcdc;letter-spacing:-0.2px;">0008</div>
<div class="a" style="left:1331px;top:75px;width:589px;height:21px;background:#393939;border-bottom:1px solid #2e2e2e;"></div><div class="a t" style="left:1341px;top:80px;font-size:12px;color:#b4b4b4;">Scene: untitled*</div><div class="a t" style="left:1433px;top:80px;font-size:12px;color:#b4b4b4;">::</div><div class="a t" style="left:1448px;top:80px;font-size:12px;color:#b4b4b4;letter-spacing:-0.4px;">1891 Frames</div><div class="a t" style="left:1519px;top:80px;font-size:12px;color:#b4b4b4;letter-spacing:-0.2px;">Level: B</div><div class="a" style="left:1331px;top:96px;width:589px;height:29px;background:#484848;"></div><div class="a" style="left:1428px;top:97px;width:1px;height:27px;background:#3a3a3a;"></div><div class="a" style="left:1518px;top:97px;width:1px;height:27px;background:#3a3a3a;"></div><div class="a" style="left:1558px;top:97px;width:1px;height:27px;background:#3a3a3a;"></div><svg class="a" style="left:1338px;top:102px;" width="15" height="18" viewBox="0 0 15 18"><path d="M0.5 6L6 0.5H14.5V17.5H0.5Z" fill="#f6f6f6"/><path d="M0.5 6.5H6.5V0.5Z" fill="#dcdcdc"/><path d="M0.5 6.5L6.5 0.5M0.5 6.5H6.5V0.5" fill="none" stroke="#111" stroke-width="1"/><path d="M4 14L11 7" stroke="#6a6a6a" stroke-width="2.2"/><path d="M2 16V10L8 16Z M13 5H7L13 11Z" fill="#6a6a6a"/></svg><svg class="a" style="left:1369px;top:102px;" width="15" height="18" viewBox="0 0 15 18"><path d="M0.5 6L6 0.5H14.5V17.5H0.5Z" fill="#f6f6f6"/><path d="M0.5 6.5H6.5V0.5Z" fill="#dcdcdc"/><path d="M0.5 6.5L6.5 0.5M0.5 6.5H6.5V0.5" fill="none" stroke="#111" stroke-width="1"/><rect x="3" y="10" width="4" height="4" fill="#777"/><path d="M7 6H13M10 6V15" stroke="#444" stroke-width="2.2"/></svg><svg class="a" style="left:1400px;top:102px;" width="15" height="18" viewBox="0 0 15 18"><path d="M0.5 6L6 0.5H14.5V17.5H0.5Z" fill="#f6f6f6"/><path d="M0.5 6.5H6.5V0.5Z" fill="#dcdcdc"/><path d="M0.5 6.5L6.5 0.5M0.5 6.5H6.5V0.5" fill="none" stroke="#111" stroke-width="1"/><rect x="8" y="5" width="4" height="4" fill="#555"/><rect x="2" y="11" width="4" height="4" fill="#8a8a8a"/><rect x="8" y="11" width="4" height="4" fill="#777"/></svg><div class="a t" style="left:1439px;top:106px;font-size:12px;color:#8a8a8a;">1's</div><div class="a t" style="left:1466px;top:106px;font-size:12px;color:#8a8a8a;">2's</div><div class="a t" style="left:1493px;top:106px;font-size:12px;color:#8a8a8a;">3's</div><svg class="a" style="left:1530px;top:103px;" width="17" height="17" viewBox="0 0 17 17"><path d="M3 8A5.5 5.5 0 0 1 13 5" fill="none" stroke="#eee" stroke-width="2.6"/><path d="M10 2L15 5L11 8Z" fill="#eee"/><path d="M14 9A5.5 5.5 0 0 1 4 12" fill="none" stroke="#eee" stroke-width="2.6"/><path d="M7 15L2 12L6 9Z" fill="#eee"/></svg><svg class="a" style="left:1569px;top:102px;" width="16" height="17" viewBox="0 0 16 17"><path d="M1 8V15H15V10" fill="none" stroke="#eee" stroke-width="2"/><path d="M3 10C4 4 8 3 11 4" fill="none" stroke="#eee" stroke-width="2.2"/><path d="M10 0L14 4L10 8Z" fill="#eee"/></svg><svg class="a" style="left:1600px;top:103px;" width="17" height="14" viewBox="0 0 17 14"><path d="M10 1H15V13H10" fill="none" stroke="#eee" stroke-width="1.5"/><path d="M0 5H6V1L12 7L6 13V9H0Z" fill="#eee"/></svg><svg class="a" style="left:1632px;top:103px;" width="15" height="14" viewBox="0 0 15 14"><path d="M6 1H1V13H6" fill="none" stroke="#eee" stroke-width="1.5"/><path d="M3 5H8V1L14 7L8 13V9H3Z" fill="#eee"/></svg><svg class="a" style="left:1662px;top:102px;" width="18" height="18" viewBox="0 0 18 18"><rect x="7" y="0" width="4" height="6" fill="#eee"/><path d="M2 7H16L9 11Z" fill="#eee" stroke="#eee"/><path d="M1 9L9 12L17 9" fill="none" stroke="#eee" stroke-width="1.2"/><path d="M5 13H13L9 17Z" fill="#eee"/></svg><div class="a" style="left:1331px;top:125px;width:589px;height:103px;background:#484848;"></div><div class="a" style="left:1335px;top:129px;width:67px;height:21px;background:#5c5c5c;border-radius:3px;"></div><svg class="a" style="left:1349px;top:132px;" width="40" height="15" viewBox="0 0 40 15"><rect x="0.5" y="3.5" width="14" height="10" fill="none" stroke="#eee"/><rect x="1" y="4" width="13" height="3" fill="#eee"/><path d="M17 8L21 4V12Z" fill="#ddd"/><rect x="23.5" y="1.5" width="9" height="13" fill="#999" stroke="#eee"/><rect x="23" y="1" width="3" height="14" fill="#eee"/></svg><svg class="a" style="left:1337px;top:169px;" width="9" height="12" viewBox="0 0 9 12"><path d="M8 0V12L0 6Z" fill="#666"/></svg><svg class="a" style="left:1355px;top:167px;" width="27" height="15" viewBox="0 0 27 15"><path d="M0 4L4 0H27V15H0Z" fill="#e8e8e8"/><path d="M0 4H4V0Z" fill="#777"/><path d="M9 8.5H19M14 3.5V13.5" stroke="#222" stroke-width="2"/></svg><svg class="a" style="left:1390px;top:170px;" width="8" height="10" viewBox="0 0 8 10"><path d="M0 0V10L8 5Z" fill="#e0e0e0"/></svg><div class="a" style="left:1335px;top:201px;width:67px;height:21px;background:#5c5c5c;border-radius:3px;"></div><div class="a t" style="left:1339px;top:206px;font-size:12px;color:#f0f0f0;">Frame</div><svg class="a" style="left:1389px;top:210px;" width="9" height="5" viewBox="0 0 9 5"><path d="M0 0H9L4.5 5Z" fill="#e8e8e8"/></svg><div class="a" style="left:1405px;top:125px;width:499px;height:100px;border:1px solid #8a8a8a;border-right:1px solid #aaa;"></div><div class="a" style="left:1406px;top:126px;width:21px;height:98px;background:#2b65a5;"></div><svg class="a" style="left:1410px;top:129px;" width="12" height="13" viewBox="0 0 12 13"><path d="M3 6V3.5A3 3 0 0 1 9 3.5V6" fill="none" stroke="#4a7fbf" stroke-width="1.3"/><rect x="1" y="6" width="10" height="7" fill="#4a7fbf"/></svg><div class="a" style="left:1406px;top:143px;width:21px;height:1px;background:#1d1d1d;"></div><svg class="a" style="left:1412px;top:150px;" width="9" height="5" viewBox="0 0 9 5"><path d="M0 0H9L4.5 5Z" fill="#eee"/></svg><div class="a t" style="left:1411px;top:168px;font-size:12px;color:#e8e8e8;transform-origin:0 0;transform:rotate(90deg) translate(0,-12px);">Camera1</div><div class="a" style="left:1428px;top:126px;width:73px;height:98px;background:#686541;"></div><div class="a" style="left:1501px;top:126px;width:1px;height:98px;background:#202020;"></div><div class="a t" style="left:1431px;top:131px;font-size:12px;color:#ff1818;">Col1</div><div class="a" style="left:1428px;top:143px;width:73px;height:1px;background:#2a2a2a;"></div><div class="a" style="left:1428px;top:206px;width:73px;height:1px;background:#2a2a2a;"></div><div class="a" style="left:1428px;top:144px;width:18px;height:18px;background:#d2cf6c;"></div><svg class="a" style="left:1429px;top:147px;" width="16" height="11" viewBox="0 0 16 11"><path d="M1 5.5C4 0.5 12 0.5 15 5.5C12 10.5 4 10.5 1 5.5Z" fill="#f4f4f4" stroke="#222" stroke-width="0.8"/><circle cx="8" cy="5.5" r="3" fill="#222"/><circle cx="7" cy="4.5" r="0.9" fill="#ddd"/></svg><div class="a" style="left:1447px;top:144px;width:18px;height:18px;background:#ee9f78;"></div><svg class="a" style="left:1448px;top:145px;" width="16" height="16" viewBox="0 0 16 16"><circle cx="8" cy="8" r="7" fill="#f4f4f4" stroke="#333" stroke-width="0.8"/><rect x="4.5" y="4.5" width="7" height="7" fill="#222"/></svg><div class="a" style="left:1465px;top:144px;width:1px;height:18px;background:#2a2a2a;"></div><svg class="a" style="left:1469px;top:147px;" width="12" height="13" viewBox="0 0 12 13"><path d="M3 6V3.5A3 3 0 0 1 9 3.5V6" fill="none" stroke="#8a8a7a" stroke-width="1.2"/><rect x="1" y="6" width="10" height="7" fill="#8a8a7a"/><rect x="5" y="8" width="2" height="3" fill="#555"/></svg><div class="a" style="left:1483px;top:144px;width:1px;height:18px;background:#2a2a2a;"></div><svg class="a" style="left:1488px;top:151px;" width="9" height="5" viewBox="0 0 9 5"><path d="M0 0H9L4.5 5Z" fill="#eee"/></svg><div class="a" style="left:1428px;top:162px;width:73px;height:1px;background:#2a2a2a;"></div><div class="a" style="left:1502px;top:126px;width:73px;height:98px;background:#3e593b;"></div><div class="a" style="left:1575px;top:126px;width:1px;height:98px;background:#202020;"></div><div class="a t" style="left:1505px;top:131px;font-size:12px;color:#e8e8e8;">Col2</div><div class="a" style="left:1502px;top:143px;width:73px;height:1px;background:#2a2a2a;"></div><div class="a" style="left:1502px;top:206px;width:73px;height:1px;background:#2a2a2a;"></div><div class="a" style="left:1502px;top:144px;width:18px;height:18px;background:#d2cf6c;"></div><svg class="a" style="left:1503px;top:147px;" width="16" height="11" viewBox="0 0 16 11"><path d="M1 5.5C4 0.5 12 0.5 15 5.5C12 10.5 4 10.5 1 5.5Z" fill="#f4f4f4" stroke="#222" stroke-width="0.8"/><circle cx="8" cy="5.5" r="3" fill="#222"/><circle cx="7" cy="4.5" r="0.9" fill="#ddd"/></svg><div class="a" style="left:1521px;top:144px;width:18px;height:18px;background:#ee9f78;"></div><svg class="a" style="left:1522px;top:145px;" width="16" height="16" viewBox="0 0 16 16"><circle cx="8" cy="8" r="7" fill="#f4f4f4" stroke="#333" stroke-width="0.8"/><rect x="4.5" y="4.5" width="7" height="7" fill="#222"/></svg><div class="a" style="left:1539px;top:144px;width:1px;height:18px;background:#2a2a2a;"></div><svg class="a" style="left:1543px;top:147px;" width="12" height="13" viewBox="0 0 12 13"><path d="M3 6V3.5A3 3 0 0 1 9 3.5V6" fill="none" stroke="#8a8a7a" stroke-width="1.2"/><rect x="1" y="6" width="10" height="7" fill="#8a8a7a"/><rect x="5" y="8" width="2" height="3" fill="#555"/></svg><div class="a" style="left:1557px;top:144px;width:1px;height:18px;background:#2a2a2a;"></div><svg class="a" style="left:1562px;top:151px;" width="9" height="5" viewBox="0 0 9 5"><path d="M0 0H9L4.5 5Z" fill="#eee"/></svg><div class="a" style="left:1502px;top:162px;width:73px;height:1px;background:#2a2a2a;"></div><div class="a" style="left:1576px;top:126px;width:73px;height:98px;background:#4f6282;"></div><div class="a" style="left:1649px;top:126px;width:1px;height:98px;background:#202020;"></div><div class="a t" style="left:1579px;top:131px;font-size:12px;color:#e8e8e8;">Col3</div><div class="a" style="left:1576px;top:143px;width:73px;height:1px;background:#2a2a2a;"></div><div class="a" style="left:1576px;top:206px;width:73px;height:1px;background:#2a2a2a;"></div><div class="a" style="left:1576px;top:144px;width:18px;height:18px;background:#d2cf6c;"></div><svg class="a" style="left:1577px;top:147px;" width="16" height="11" viewBox="0 0 16 11"><path d="M1 5.5C4 0.5 12 0.5 15 5.5C12 10.5 4 10.5 1 5.5Z" fill="#f4f4f4" stroke="#222" stroke-width="0.8"/><circle cx="8" cy="5.5" r="3" fill="#222"/><circle cx="7" cy="4.5" r="0.9" fill="#ddd"/></svg><div class="a" style="left:1595px;top:144px;width:18px;height:18px;background:#ee9f78;"></div><svg class="a" style="left:1596px;top:145px;" width="16" height="16" viewBox="0 0 16 16"><circle cx="8" cy="8" r="7" fill="#f4f4f4" stroke="#333" stroke-width="0.8"/><rect x="4.5" y="4.5" width="7" height="7" fill="#222"/></svg><div class="a" style="left:1613px;top:144px;width:1px;height:18px;background:#2a2a2a;"></div><svg class="a" style="left:1617px;top:147px;" width="12" height="13" viewBox="0 0 12 13"><path d="M3 6V3.5A3 3 0 0 1 9 3.5V6" fill="none" stroke="#8a8a7a" stroke-width="1.2"/><rect x="1" y="6" width="10" height="7" fill="#8a8a7a"/><rect x="5" y="8" width="2" height="3" fill="#555"/></svg><div class="a" style="left:1631px;top:144px;width:1px;height:18px;background:#2a2a2a;"></div><svg class="a" style="left:1636px;top:151px;" width="9" height="5" viewBox="0 0 9 5"><path d="M0 0H9L4.5 5Z" fill="#eee"/></svg><div class="a" style="left:1576px;top:162px;width:73px;height:1px;background:#2a2a2a;"></div><div class="a" style="left:1650px;top:126px;width:73px;height:98px;background:#53633f;"></div><div class="a" style="left:1723px;top:126px;width:1px;height:98px;background:#202020;"></div><div class="a t" style="left:1653px;top:131px;font-size:12px;color:#e8e8e8;">Col4</div><div class="a" style="left:1650px;top:143px;width:73px;height:1px;background:#2a2a2a;"></div><div class="a" style="left:1650px;top:206px;width:73px;height:1px;background:#2a2a2a;"></div><div class="a" style="left:1650px;top:144px;width:18px;height:18px;background:#d2cf6c;"></div><svg class="a" style="left:1651px;top:147px;" width="16" height="11" viewBox="0 0 16 11"><path d="M1 5.5C4 0.5 12 0.5 15 5.5C12 10.5 4 10.5 1 5.5Z" fill="#f4f4f4" stroke="#222" stroke-width="0.8"/><circle cx="8" cy="5.5" r="3" fill="#222"/><circle cx="7" cy="4.5" r="0.9" fill="#ddd"/></svg><div class="a" style="left:1669px;top:144px;width:18px;height:18px;background:#ee9f78;"></div><svg class="a" style="left:1670px;top:145px;" width="16" height="16" viewBox="0 0 16 16"><circle cx="8" cy="8" r="7" fill="#f4f4f4" stroke="#333" stroke-width="0.8"/><rect x="4.5" y="4.5" width="7" height="7" fill="#222"/></svg><div class="a" style="left:1687px;top:144px;width:1px;height:18px;background:#2a2a2a;"></div><svg class="a" style="left:1691px;top:147px;" width="12" height="13" viewBox="0 0 12 13"><path d="M3 6V3.5A3 3 0 0 1 9 3.5V6" fill="none" stroke="#8a8a7a" stroke-width="1.2"/><rect x="1" y="6" width="10" height="7" fill="#8a8a7a"/><rect x="5" y="8" width="2" height="3" fill="#555"/></svg><div class="a" style="left:1705px;top:144px;width:1px;height:18px;background:#2a2a2a;"></div><div class="a" style="left:1650px;top:162px;width:73px;height:1px;background:#2a2a2a;"></div><div class="a" style="left:1724px;top:126px;width:73px;height:98px;background:#484848;"></div><div class="a" style="left:1797px;top:126px;width:1px;height:98px;background:#202020;"></div><div class="a t" style="left:1727px;top:131px;font-size:12px;color:#e8e8e8;">NoteLevel1</div><div class="a" style="left:1724px;top:143px;width:73px;height:1px;background:#2a2a2a;"></div><div class="a" style="left:1724px;top:206px;width:73px;height:1px;background:#2a2a2a;"></div><div class="a" style="left:1742px;top:144px;width:1px;height:18px;background:#2a2a2a;"></div><div class="a" style="left:1760px;top:144px;width:1px;height:18px;background:#2a2a2a;"></div><div class="a" style="left:1778px;top:144px;width:1px;height:18px;background:#2a2a2a;"></div><svg class="a" style="left:1765px;top:147px;" width="12" height="13" viewBox="0 0 12 13"><path d="M3 6V3.5A3 3 0 0 1 9 3.5V6" fill="none" stroke="#8a8a8a" stroke-width="1.2"/><rect x="1" y="6" width="10" height="7" fill="#8a8a8a"/></svg><div class="a" style="left:1724px;top:162px;width:73px;height:1px;background:#2a2a2a;"></div><div class="a" style="left:1871px;top:126px;width:1px;height:98px;background:#202020;"></div><div class="a t" style="left:1801px;top:131px;font-size:12px;color:#e8e8e8;">Col6</div><div class="a" style="left:1903px;top:126px;width:1px;height:98px;background:#202020;"></div><div class="a t" style="left:1875px;top:131px;font-size:12px;color:#e8e8e8;">Col7</div><div class="a" style="left:1428px;top:163px;width:73px;height:43px;background:#ffffff;"></div><svg class="a" style="left:1428px;top:163px;" width="73" height="43" viewBox="0 0 73 43"><circle cx="36" cy="22" r="17.5" fill="#ebe39a" stroke="#333" stroke-width="1"/></svg><div class="a t" style="left:1431px;top:210px;font-size:12px;color:#e8e8e8;">Table</div><div class="a" style="left:1502px;top:163px;width:73px;height:43px;background:#ffffff;"></div><svg class="a" style="left:1502px;top:163px;" width="73" height="43" viewBox="0 0 73 43"><ellipse cx="45" cy="10.5" rx="4.3" ry="6" fill="#d6a2a2" stroke="#333" stroke-width="0.8"/></svg><div class="a t" style="left:1505px;top:210px;font-size:12px;color:#e8e8e8;">Table</div><div class="a" style="left:1576px;top:163px;width:73px;height:43px;background:#ffffff;"></div><svg class="a" style="left:1576px;top:163px;" width="73" height="43" viewBox="0 0 73 43"><path d="M55 10L60 8L56 11L60 12L56 15" stroke="#8480dc" stroke-width="1.6" fill="none"/></svg><div class="a t" style="left:1579px;top:210px;font-size:12px;color:#e8e8e8;">Table</div><svg class="a" style="left:1650px;top:163px;" width="73" height="43" viewBox="0 0 73 43"><path d="M28 8H32L36 4V18L32 14H28Z" fill="#e8e8e8"/><path d="M6 32H67" stroke="#eee" stroke-width="2"/><path d="M6 34.5H67" stroke="#eee" stroke-width="0.7"/><path d="M6.5 34V38" stroke="#eee" stroke-width="0.8"/><path d="M10.3 34V36.5" stroke="#eee" stroke-width="0.8"/><path d="M14.1 34V38" stroke="#eee" stroke-width="0.8"/><path d="M17.9 34V36.5" stroke="#eee" stroke-width="0.8"/><path d="M21.7 34V38" stroke="#eee" stroke-width="0.8"/><path d="M25.5 34V36.5" stroke="#eee" stroke-width="0.8"/><path d="M29.299999999999997 34V38" stroke="#eee" stroke-width="0.8"/><path d="M33.099999999999994 34V36.5" stroke="#eee" stroke-width="0.8"/><path d="M36.9 34V38" stroke="#eee" stroke-width="0.8"/><path d="M40.699999999999996 34V36.5" stroke="#eee" stroke-width="0.8"/><path d="M44.5 34V38" stroke="#eee" stroke-width="0.8"/><path d="M48.3 34V36.5" stroke="#eee" stroke-width="0.8"/><path d="M52.099999999999994 34V38" stroke="#eee" stroke-width="0.8"/><path d="M55.9 34V36.5" stroke="#eee" stroke-width="0.8"/><path d="M59.699999999999996 34V38" stroke="#eee" stroke-width="0.8"/><path d="M63.5 34V36.5" stroke="#eee" stroke-width="0.8"/><path d="M67.3 34V38" stroke="#eee" stroke-width="0.8"/><path d="M26 27H34V31L30 35L26 31Z" fill="#f4f4f4" stroke="#333" stroke-width="0.5"/></svg><div class="a" style="left:1725px;top:164px;width:71px;height:41px;background:#ececec;"></div><svg class="a" style="left:1725px;top:164px;" width="71" height="41" viewBox="0 0 71 41"><path d="M10 5H46M10 15H38M10 25H33M10 35H28" stroke="#111" stroke-width="1.6"/><path d="M51 4L60 10L42 38L33 39L36 31Z" fill="none" stroke="#111" stroke-width="1.8"/></svg><div class="a" style="left:1331px;top:225px;width:589px;height:3px;background:#2c2c2c;"></div><div class="a" style="left:1331px;top:228px;width:589px;height:796px;background:#2a2a2a;"></div><div class="a" style="left:1332px;top:228px;width:73px;height:796px;background:#3a3a3a;"></div><div class="a" style="left:1406px;top:228px;width:21px;height:796px;background:#3b4a5b;"></div><div class="a" style="left:1427px;top:228px;width:1px;height:796px;background:#202020;"></div><div class="a" style="left:1428px;top:228px;width:476px;height:796px;background:#434343;"></div><div class="a" style="left:1501px;top:228px;width:1px;height:796px;background:#2a2a2a;"></div><div class="a" style="left:1575px;top:228px;width:1px;height:796px;background:#2a2a2a;"></div><div class="a" style="left:1649px;top:228px;width:1px;height:796px;background:#2a2a2a;"></div><div class="a" style="left:1723px;top:228px;width:1px;height:796px;background:#2a2a2a;"></div><div class="a" style="left:1797px;top:228px;width:1px;height:796px;background:#2a2a2a;"></div><div class="a" style="left:1871px;top:228px;width:1px;height:796px;background:#2a2a2a;"></div><div class="a" style="left:1428px;top:228px;width:73px;height:480px;background:#7f7a4b;"></div><div class="a" style="left:1502px;top:228px;width:73px;height:796px;background:#4d6e4a;"></div><div class="a" style="left:1576px;top:228px;width:73px;height:660px;background:#677a9a;"></div><div class="a" style="left:1650px;top:228px;width:73px;height:796px;background:#657655;"></div><div class="a" style="left:1332px;top:247px;width:572px;height:1px;background:#2a2a2a;"></div><div class="a" style="left:1332px;top:267px;width:572px;height:1px;background:#2a2a2a;"></div><div class="a" style="left:1332px;top:287px;width:572px;height:1px;background:#2a2a2a;"></div><div class="a" style="left:1332px;top:307px;width:572px;height:1px;background:#2a2a2a;"></div><div class="a" style="left:1332px;top:327px;width:572px;height:1px;background:#2a2a2a;"></div><div class="a" style="left:1332px;top:347px;width:572px;height:1px;background:#2a2a2a;"></div><div class="a" style="left:1332px;top:367px;width:572px;height:1px;background:#2a2a2a;"></div><div class="a" style="left:1332px;top:387px;width:572px;height:1px;background:#2a2a2a;"></div><div class="a" style="left:1332px;top:407px;width:572px;height:1px;background:#2a2a2a;"></div><div class="a" style="left:1332px;top:427px;width:572px;height:1px;background:#2a2a2a;"></div><div class="a" style="left:1332px;top:447px;width:572px;height:1px;background:#2a2a2a;"></div><div class="a" style="left:1332px;top:467px;width:572px;height:1px;background:#2a2a2a;"></div><div class="a" style="left:1332px;top:487px;width:572px;height:1px;background:#2a2a2a;"></div><div class="a" style="left:1332px;top:507px;width:572px;height:1px;background:#2a2a2a;"></div><div class="a" style="left:1332px;top:527px;width:572px;height:1px;background:#2a2a2a;"></div><div class="a" style="left:1332px;top:547px;width:572px;height:1px;background:#2a2a2a;"></div><div class="a" style="left:1332px;top:567px;width:572px;height:1px;background:#2a2a2a;"></div><div class="a" style="left:1332px;top:587px;width:572px;height:1px;background:#2a2a2a;"></div><div class="a" style="left:1332px;top:607px;width:572px;height:1px;background:#2a2a2a;"></div><div class="a" style="left:1332px;top:627px;width:572px;height:1px;background:#2a2a2a;"></div><div class="a" style="left:1332px;top:647px;width:572px;height:1px;background:#2a2a2a;"></div><div class="a" style="left:1332px;top:667px;width:572px;height:1px;background:#2a2a2a;"></div><div class="a" style="left:1332px;top:687px;width:572px;height:1px;background:#2a2a2a;"></div><div class="a" style="left:1332px;top:707px;width:572px;height:1px;background:#2a2a2a;"></div><div class="a" style="left:1332px;top:727px;width:572px;height:1px;background:#2a2a2a;"></div><div class="a" style="left:1332px;top:747px;width:572px;height:1px;background:#2a2a2a;"></div><div class="a" style="left:1332px;top:767px;width:572px;height:1px;background:#2a2a2a;"></div><div class="a" style="left:1332px;top:787px;width:572px;height:1px;background:#2a2a2a;"></div><div class="a" style="left:1332px;top:807px;width:572px;height:1px;background:#2a2a2a;"></div><div class="a" style="left:1332px;top:827px;width:572px;height:1px;background:#2a2a2a;"></div><div class="a" style="left:1332px;top:847px;width:572px;height:1px;background:#2a2a2a;"></div><div class="a" style="left:1332px;top:867px;width:572px;height:1px;background:#2a2a2a;"></div><div class="a" style="left:1332px;top:887px;width:572px;height:1px;background:#2a2a2a;"></div><div class="a" style="left:1332px;top:907px;width:572px;height:1px;background:#2a2a2a;"></div><div class="a" style="left:1332px;top:927px;width:572px;height:1px;background:#2a2a2a;"></div><div class="a" style="left:1332px;top:947px;width:572px;height:1px;background:#2a2a2a;"></div><div class="a" style="left:1332px;top:967px;width:572px;height:1px;background:#2a2a2a;"></div><div class="a" style="left:1332px;top:987px;width:572px;height:1px;background:#2a2a2a;"></div><div class="a" style="left:1332px;top:1007px;width:572px;height:1px;background:#2a2a2a;"></div><div class="a" style="left:1428px;top:248px;width:6px;height:460px;background:#bdbb97;"></div><div class="a" style="left:1502px;top:228px;width:6px;height:796px;background:#8cb38c;"></div><div class="a" style="left:1576px;top:228px;width:6px;height:640px;background:#9fb4bb;"></div><div class="a" style="left:1650px;top:228px;width:6px;height:796px;background:#a4b182;"></div><div class="a" style="left:1716px;top:228px;width:7px;height:796px;background:repeating-linear-gradient(#d2dcae 0 1px,#657655 1px 2px);"></div><div class="a" style="left:1650px;top:228px;width:73px;height:2px;background:#eef070;"></div><div class="a" style="left:1464px;top:248px;width:1px;height:20px;background:#f0f0f0;"></div><div class="a" style="left:1464px;top:267px;width:1px;height:20px;background:#f0f0f0;"></div><div class="a t" style="left:1487px;top:293px;font-size:12px;color:#e8e8e8;">2</div><div class="a" style="left:1464px;top:308px;width:1px;height:20px;background:#f0f0f0;"></div><div class="a" style="left:1464px;top:327px;width:1px;height:20px;background:#f0f0f0;"></div><div class="a t" style="left:1487px;top:353px;font-size:12px;color:#e8e8e8;">3</div><div class="a" style="left:1464px;top:368px;width:1px;height:20px;background:#f0f0f0;"></div><div class="a" style="left:1464px;top:387px;width:1px;height:20px;background:#f0f0f0;"></div><div class="a t" style="left:1487px;top:413px;font-size:12px;color:#e8e8e8;">4</div><div class="a" style="left:1464px;top:428px;width:1px;height:20px;background:#f0f0f0;"></div><div class="a" style="left:1464px;top:447px;width:1px;height:20px;background:#f0f0f0;"></div><div class="a t" style="left:1487px;top:473px;font-size:12px;color:#e8e8e8;">5</div><div class="a" style="left:1464px;top:488px;width:1px;height:20px;background:#f0f0f0;"></div><div class="a" style="left:1464px;top:507px;width:1px;height:20px;background:#f0f0f0;"></div><div class="a t" style="left:1487px;top:533px;font-size:12px;color:#e8e8e8;">6</div><div class="a" style="left:1464px;top:548px;width:1px;height:20px;background:#f0f0f0;"></div><div class="a" style="left:1464px;top:567px;width:1px;height:20px;background:#f0f0f0;"></div><div class="a t" style="left:1487px;top:593px;font-size:12px;color:#e8e8e8;">7</div><div class="a" style="left:1464px;top:608px;width:1px;height:20px;background:#f0f0f0;"></div><div class="a" style="left:1464px;top:627px;width:1px;height:20px;background:#f0f0f0;"></div><div class="a t" style="left:1487px;top:653px;font-size:12px;color:#e8e8e8;">8</div><div class="a" style="left:1464px;top:668px;width:1px;height:20px;background:#f0f0f0;"></div><div class="a" style="left:1464px;top:687px;width:1px;height:20px;background:#f0f0f0;"></div><div class="a" style="left:1538px;top:247px;width:1px;height:776px;background:#f0f0f0;"></div><div class="a" style="left:1612px;top:247px;width:1px;height:639px;background:#f0f0f0;"></div><div class="a" style="left:1428px;top:228px;width:73px;height:20px;border:2px solid #0a0a0a;"></div><div class="a" style="left:1430px;top:230px;width:4px;height:16px;background:#bdbb97;"></div><div class="a t" style="left:1436px;top:234px;font-size:12px;color:#e8e8e8;">B</div><div class="a t" style="left:1487px;top:234px;font-size:12px;color:#e8e8e8;">1</div><div class="a t" style="left:1510px;top:234px;font-size:12px;color:#e8e8e8;">A</div><div class="a t" style="left:1561px;top:234px;font-size:12px;color:#e8e8e8;">1</div><div class="a t" style="left:1584px;top:234px;font-size:12px;color:#e8e8e8;">C</div><div class="a t" style="left:1624px;top:234px;font-size:12px;color:#e8e8e8;">1</div><svg class="a" style="left:1428px;top:708px;" width="73" height="19" viewBox="0 0 73 19"><path d="M0 1L73 18M0 18L73 1" stroke="#8a8a8a" stroke-width="0.8"/></svg><svg class="a" style="left:1576px;top:888px;" width="73" height="19" viewBox="0 0 73 19"><path d="M0 1L73 18M0 18L73 1" stroke="#8a8a8a" stroke-width="0.8"/></svg><svg class="a" style="left:1576px;top:868px;" width="6" height="20" viewBox="0 0 6 20"><path d="M0 20L6 14V0H0Z" fill="#9fb4bb"/></svg><svg class="a" style="left:1428px;top:688px;" width="6" height="20" viewBox="0 0 6 20"><path d="M0 20L6 14V0H0Z" fill="#bdbb97"/></svg><div class="a" style="left:1643px;top:240px;width:1px;height:320px;background:#f4f4f4;"></div><svg class="a" style="left:1638px;top:230px;" width="11" height="13" viewBox="0 0 11 13"><rect x="0.5" y="0.5" width="10" height="12" fill="#fff" stroke="#000"/><circle cx="5" cy="4.3" r="2.3" fill="none" stroke="#000" stroke-width="1.3"/><path d="M4.5 6.5V11M4.5 8.5H7.5M4.5 10.5H7" stroke="#000" stroke-width="1.3"/></svg><svg class="a" style="left:1638px;top:410px;" width="11" height="13" viewBox="0 0 11 13"><rect x="0.5" y="0.5" width="10" height="12" fill="#fff" stroke="#000"/><circle cx="5" cy="4.3" r="2.3" fill="none" stroke="#000" stroke-width="1.3"/><path d="M4.5 6.5V11M4.5 8.5H7.5M4.5 10.5H7" stroke="#000" stroke-width="1.3"/></svg><svg class="a" style="left:1638px;top:550px;" width="11" height="13" viewBox="0 0 11 13"><rect x="0.5" y="0.5" width="10" height="12" fill="#fff" stroke="#000"/><circle cx="5" cy="4.3" r="2.3" fill="none" stroke="#000" stroke-width="1.3"/><path d="M4.5 6.5V11M4.5 8.5H7.5M4.5 10.5H7" stroke="#000" stroke-width="1.3"/></svg><svg class="a" style="left:1638px;top:570px;" width="11" height="10" viewBox="0 0 11 10"><path d="M0.5 0.5H10.5V7L8 9.5H0.5Z" fill="#fff" stroke="#000"/><path d="M3 4A3 3 0 1 0 6 2" fill="none" stroke="#555"/></svg><svg class="a" style="left:1639px;top:293px;" width="9" height="6" viewBox="0 0 9 6"><path d="M0 0H9L4.5 5Z" fill="#fff" stroke="#222" stroke-width="0.6"/></svg><svg class="a" style="left:1639px;top:353px;" width="9" height="6" viewBox="0 0 9 6"><path d="M0 6H9L4.5 1Z" fill="#fff" stroke="#222" stroke-width="0.6"/></svg><svg class="a" style="left:1639px;top:453px;" width="9" height="6" viewBox="0 0 9 6"><path d="M0 0H9L4.5 5Z" fill="#fff" stroke="#222" stroke-width="0.6"/></svg><svg class="a" style="left:1639px;top:513px;" width="9" height="6" viewBox="0 0 9 6"><path d="M0 6H9L4.5 1Z" fill="#fff" stroke="#222" stroke-width="0.6"/></svg><svg class="a" style="left:0px;top:0px;shape-rendering:crispEdges;" width="1920" height="1040" viewBox="0 0 1920 1040"><path d="M1683.5 230V232H1683.5V234H1684.5V236H1684.5V238H1683.5V240H1684.5V242H1684.5V244H1683.5V246H1684.5V248H1684.5V250H1684.5V252H1684.5V254H1683.5V256H1684.5V258H1683.5V260H1684.5V262H1683.5V264H1683.5V266H1683.5V268H1684.5V270H1684.5V272H1684.5V274H1684.5V276H1683.5V278H1684.5V280H1684.5V282H1684.5V284H1683.5V286H1683.5V288H1684.5V290H1683.5V292H1683.5V294H1684.5V296H1684.5V298H1684.5V300H1684.5V302H1683.5V304H1684.5V306H1683.5V308H1684.5V310H1683.5V312H1683.5V314H1684.5V316H1683.5V318H1684.5V320H1684.5V322H1684.5V324H1684.5V326H1683.5V328H1684.5V330H1683.5V332H1684.5V334H1684.5V336H1684.5V338H1683.5V340H1683.5V342H1683.5V344H1683.5V346H1684.5V348H1684.5V350H1684.5V352H1684.5V354H1683.5V356H1683.5V358H1684.5V360H1684.5V362H1684.5V364H1683.5V366H1683.5V368H1684.5V370H1684.5V372H1683.5V374H1683.5V376H1684.5V378H1684.5V380H1683.5V382H1684.5V384H1684.5V386H1683.5V388H1684.5V390H1683.5V392H1683.5V394H1684.5V396H1684.5V398H1683.5V400H1684.5V402H1684.5V404H1684.5V406H1683.5V408H1684.5V410H1683.5V412H1684.5V414H1683.5V416H1684.5V418H1684.5V420H1684.5V422H1684.5V424H1683.5V426H1684.5V428H1684.5V430H1683.5V432H1683.5V434H1683.5V436H1683.5V438H1684.5V440H1684.5V442H1684.5V444H1684.5V446H1683.5V448H1683.5V450H1681.5V452H1678.5V454H1682.5V456H1682.5V458H1681.5V460H1680.5V462H1682.5V464H1680.5V466H1681.5V468H1678.5V470H1677.5V472H1677.5V474H1682.5V476H1682.5V478H1681.5V480H1682.5V482H1680.5V484H1677.5V486H1683.5V488H1683.5V490H1677.5V492H1683.5V494H1680.5V496H1682.5V498H1680.5V500H1678.5V502H1680.5V504H1681.5V506H1677.5V508H1679.5V510H1681.5V512H1677.5V514H1681.5V516H1679.5V518H1678.5V520H1681.5V522H1681.5V524H1678.5V526H1679.5V528H1678.5V530H1680.5V532H1682.5V534H1677.5V536H1681.5V538H1677.5V540H1677.5V542H1678.5V544H1680.5V546H1678.5V548H1678.5V550H1677.5V552H1683.5V554H1682.5V556H1677.5V558H1681.5V560H1678.5V562H1677.5V564H1679.5V566H1683.5V568H1682.5V570H1677.5V572H1679.5V574H1679.5V576H1679.5V578H1682.5V580H1677.5V582H1678.5V584H1683.5V586H1678.5V588H1682.5V590H1680.5V592H1678.5V594H1680.5V596H1679.5V598H1679.5V600H1677.5V602H1680.5V604H1678.5V606H1683.5V608H1677.5V610H1677.5V612H1678.5V614H1682.5V616H1680.5V618H1681.5V620H1677.5V622H1681.5V624H1677.5V626H1681.5V628H1682.5V630H1676.5V632H1675.5V634H1679.5V636H1683.5V638H1682.5V640H1683.5V642H1675.5V644H1681.5V646H1681.5V648H1675.5V650H1676.5V652H1682.5V654H1676.5V656H1675.5V658H1675.5V660H1675.5V662H1675.5V664H1679.5V666H1674.5V668H1679.5V670H1675.5V672H1679.5V674H1676.5V676H1677.5V678H1682.5V680H1683.5V682H1677.5V684H1675.5V686H1675.5V688H1675.5V690H1682.5V692H1682.5V694H1682.5V696H1676.5V698H1677.5V700H1680.5V702H1676.5V704H1678.5V706H1676.5V708H1678.5V710H1680.5V712H1674.5V714H1679.5V716H1683.5V718H1680.5V720H1680.5V722H1679.5V724H1678.5V726H1674.5V728H1682.5V730H1674.5V732H1675.5V734H1679.5V736H1675.5V738H1683.5V740H1677.5V742H1674.5V744H1675.5V746H1675.5V748H1675.5V750H1675.5V752H1674.5V754H1680.5V756H1681.5V758H1674.5V760H1680.5V762H1680.5V764H1681.5V766H1681.5V768H1679.5V770H1682.5V772H1677.5V774H1681.5V776H1677.5V778H1682.5V780H1674.5V782H1678.5V784H1675.5V786H1675.5V788H1682.5V790H1682.5V792H1683.5V794H1674.5V796H1674.5V798H1681.5V800H1681.5V802H1680.5V804H1681.5V806H1682.5V808H1683.5V810H1676.5V812H1682.5V814H1677.5V816H1677.5V818H1678.5V820H1680.5V822H1678.5V824H1683.5V826H1681.5V828H1676.5V830H1678.5V832H1680.5V834H1681.5V836H1675.5V838H1678.5V840H1677.5V842H1674.5V844H1675.5V846H1678.5V848H1679.5V850H1681.5V852H1681.5V854H1675.5V856H1677.5V858H1677.5V860H1681.5V862H1678.5V864H1676.5V866H1683.5V868H1674.5V870H1680.5V872H1679.5V874H1680.5V876H1674.5V878H1675.5V880H1677.5V882H1676.5V884H1682.5V886H1674.5V888H1682.5V890H1682.5V892H1679.5V894H1677.5V896H1683.5V898H1677.5V900H1682.5V902H1679.5V904H1678.5V906H1675.5V908H1677.5V910H1674.5V912H1676.5V914H1675.5V916H1683.5V918H1681.5V920H1676.5V922H1676.5V924H1674.5V926H1683.5V928H1676.5V930H1679.5V932H1677.5V934H1679.5V936H1675.5V938H1676.5V940H1675.5V942H1679.5V944H1683.5V946H1674.5V948H1681.5V950H1677.5V952H1678.5V954H1683.5V956H1678.5V958H1680.5V960H1676.5V962H1680.5V964H1675.5V966H1676.5V968H1680.5V970H1682.5V972H1674.5V974H1676.5V976H1680.5V978H1678.5V980H1681.5V982H1678.5V984H1681.5V986H1676.5V988H1679.5V990H1677.5V992H1675.5V994H1679.5V996H1680.5V998H1682.5V1000H1679.5V1002H1674.5V1004H1679.5V1006H1674.5V1008H1674.5V1010H1679.5V1012H1680.5V1014H1675.5V1016H1683.5V1018H1683.5V1020H1679.5V1022H1683.5" fill="none" stroke="#cddaa6" stroke-width="1"/><path d="M1687.5 230V232H1686.5V234H1687.5V236H1686.5V238H1687.5V240H1686.5V242H1687.5V244H1686.5V246H1686.5V248H1686.5V250H1686.5V252H1687.5V254H1687.5V256H1686.5V258H1687.5V260H1686.5V262H1687.5V264H1686.5V266H1687.5V268H1687.5V270H1686.5V272H1687.5V274H1687.5V276H1686.5V278H1686.5V280H1686.5V282H1687.5V284H1687.5V286H1686.5V288H1687.5V290H1686.5V292H1687.5V294H1687.5V296H1686.5V298H1686.5V300H1686.5V302H1687.5V304H1686.5V306H1686.5V308H1687.5V310H1686.5V312H1687.5V314H1686.5V316H1687.5V318H1686.5V320H1687.5V322H1686.5V324H1686.5V326H1687.5V328H1687.5V330H1687.5V332H1686.5V334H1686.5V336H1686.5V338H1687.5V340H1686.5V342H1686.5V344H1686.5V346H1687.5V348H1686.5V350H1686.5V352H1687.5V354H1686.5V356H1686.5V358H1686.5V360H1687.5V362H1687.5V364H1687.5V366H1687.5V368H1686.5V370H1686.5V372H1686.5V374H1686.5V376H1686.5V378H1687.5V380H1687.5V382H1686.5V384H1686.5V386H1687.5V388H1686.5V390H1686.5V392H1687.5V394H1686.5V396H1687.5V398H1687.5V400H1686.5V402H1687.5V404H1687.5V406H1686.5V408H1686.5V410H1687.5V412H1686.5V414H1687.5V416H1687.5V418H1687.5V420H1687.5V422H1687.5V424H1686.5V426H1686.5V428H1686.5V430H1687.5V432H1687.5V434H1687.5V436H1686.5V438H1687.5V440H1687.5V442H1686.5V444H1687.5V446H1687.5V448H1689.5V450H1688.5V452H1691.5V454H1691.5V456H1693.5V458H1692.5V460H1690.5V462H1689.5V464H1692.5V466H1688.5V468H1690.5V470H1693.5V472H1688.5V474H1690.5V476H1691.5V478H1688.5V480H1688.5V482H1689.5V484H1693.5V486H1692.5V488H1689.5V490H1688.5V492H1690.5V494H1689.5V496H1693.5V498H1690.5V500H1691.5V502H1692.5V504H1692.5V506H1693.5V508H1690.5V510H1687.5V512H1687.5V514H1693.5V516H1687.5V518H1692.5V520H1691.5V522H1689.5V524H1693.5V526H1687.5V528H1688.5V530H1690.5V532H1687.5V534H1693.5V536H1688.5V538H1688.5V540H1687.5V542H1687.5V544H1687.5V546H1691.5V548H1692.5V550H1689.5V552H1692.5V554H1688.5V556H1690.5V558H1688.5V560H1687.5V562H1690.5V564H1692.5V566H1688.5V568H1689.5V570H1689.5V572H1692.5V574H1691.5V576H1693.5V578H1690.5V580H1693.5V582H1688.5V584H1690.5V586H1690.5V588H1690.5V590H1688.5V592H1687.5V594H1691.5V596H1692.5V598H1693.5V600H1689.5V602H1689.5V604H1688.5V606H1692.5V608H1693.5V610H1692.5V612H1687.5V614H1688.5V616H1687.5V618H1691.5V620H1689.5V622H1692.5V624H1687.5V626H1691.5V628H1687.5V630H1692.5V632H1693.5V634H1694.5V636H1690.5V638H1693.5V640H1689.5V642H1692.5V644H1694.5V646H1695.5V648H1694.5V650H1696.5V652H1690.5V654H1695.5V656H1691.5V658H1689.5V660H1695.5V662H1691.5V664H1693.5V666H1690.5V668H1689.5V670H1695.5V672H1696.5V674H1690.5V676H1695.5V678H1695.5V680H1696.5V682H1687.5V684H1687.5V686H1693.5V688H1696.5V690H1694.5V692H1689.5V694H1695.5V696H1693.5V698H1691.5V700H1694.5V702H1689.5V704H1693.5V706H1695.5V708H1688.5V710H1693.5V712H1687.5V714H1689.5V716H1687.5V718H1689.5V720H1687.5V722H1692.5V724H1690.5V726H1694.5V728H1694.5V730H1688.5V732H1696.5V734H1690.5V736H1693.5V738H1693.5V740H1695.5V742H1689.5V744H1690.5V746H1690.5V748H1690.5V750H1696.5V752H1689.5V754H1692.5V756H1692.5V758H1692.5V760H1690.5V762H1688.5V764H1690.5V766H1688.5V768H1693.5V770H1693.5V772H1695.5V774H1690.5V776H1687.5V778H1690.5V780H1692.5V782H1688.5V784H1692.5V786H1690.5V788H1694.5V790H1687.5V792H1695.5V794H1695.5V796H1694.5V798H1690.5V800H1688.5V802H1689.5V804H1691.5V806H1696.5V808H1689.5V810H1688.5V812H1692.5V814H1694.5V816H1695.5V818H1693.5V820H1696.5V822H1687.5V824H1690.5V826H1693.5V828H1692.5V830H1693.5V832H1696.5V834H1688.5V836H1687.5V838H1688.5V840H1696.5V842H1690.5V844H1696.5V846H1691.5V848H1688.5V850H1693.5V852H1692.5V854H1692.5V856H1689.5V858H1690.5V860H1688.5V862H1691.5V864H1688.5V866H1692.5V868H1687.5V870H1691.5V872H1692.5V874H1693.5V876H1689.5V878H1688.5V880H1695.5V882H1690.5V884H1693.5V886H1687.5V888H1696.5V890H1690.5V892H1694.5V894H1695.5V896H1690.5V898H1687.5V900H1691.5V902H1691.5V904H1695.5V906H1695.5V908H1695.5V910H1688.5V912H1688.5V914H1696.5V916H1693.5V918H1693.5V920H1689.5V922H1695.5V924H1696.5V926H1693.5V928H1693.5V930H1695.5V932H1696.5V934H1692.5V936H1691.5V938H1691.5V940H1691.5V942H1687.5V944H1690.5V946H1687.5V948H1693.5V950H1687.5V952H1693.5V954H1696.5V956H1688.5V958H1693.5V960H1691.5V962H1687.5V964H1688.5V966H1689.5V968H1696.5V970H1687.5V972H1693.5V974H1688.5V976H1687.5V978H1695.5V980H1688.5V982H1694.5V984H1693.5V986H1696.5V988H1696.5V990H1692.5V992H1689.5V994H1689.5V996H1694.5V998H1695.5V1000H1695.5V1002H1692.5V1004H1691.5V1006H1696.5V1008H1690.5V1010H1690.5V1012H1690.5V1014H1690.5V1016H1687.5V1018H1691.5V1020H1693.5V1022H1696.5" fill="none" stroke="#cddaa6" stroke-width="1"/></svg><div class="a" style="left:1332px;top:347px;width:384px;height:1px;background:#1c9ad6;"></div><div class="a" style="left:1724px;top:347px;width:180px;height:1px;background:#1c9ad6;"></div><div class="a" style="left:1332px;top:467px;width:384px;height:1px;background:#1c9ad6;"></div><div class="a" style="left:1724px;top:467px;width:180px;height:1px;background:#1c9ad6;"></div><div class="a" style="left:1332px;top:587px;width:384px;height:1px;background:#1c9ad6;"></div><div class="a" style="left:1724px;top:587px;width:180px;height:1px;background:#1c9ad6;"></div><div class="a" style="left:1332px;top:707px;width:384px;height:1px;background:#1c9ad6;"></div><div class="a" style="left:1724px;top:707px;width:180px;height:1px;background:#1c9ad6;"></div><div class="a" style="left:1332px;top:827px;width:384px;height:1px;background:#1c9ad6;"></div><div class="a" style="left:1724px;top:827px;width:180px;height:1px;background:#1c9ad6;"></div><div class="a" style="left:1332px;top:947px;width:384px;height:1px;background:#1c9ad6;"></div><div class="a" style="left:1724px;top:947px;width:180px;height:1px;background:#1c9ad6;"></div><div class="a" style="left:1405px;top:228px;width:1px;height:796px;background:#242424;"></div><div class="a" style="left:1797px;top:228px;width:1px;height:796px;background:#242424;"></div><div class="a" style="left:1871px;top:228px;width:1px;height:796px;background:#242424;"></div><div class="a" style="left:1332px;top:228px;width:73px;height:19px;background:#4b5b79;"></div><div class="a t" style="left:1342px;top:231px;font-size:13px;color:#9ad2ff;width:51px;text-align:right;font-weight:bold;">1</div><div class="a t" style="left:1342px;top:251px;font-size:13px;color:#9ad2ff;width:51px;text-align:right;font-weight:bold;">2</div><div class="a t" style="left:1342px;top:271px;font-size:13px;color:#9ad2ff;width:51px;text-align:right;font-weight:bold;">3</div><div class="a t" style="left:1342px;top:291px;font-size:13px;color:#9ad2ff;width:51px;text-align:right;font-weight:bold;">4</div><div class="a t" style="left:1342px;top:311px;font-size:13px;color:#9ad2ff;width:51px;text-align:right;font-weight:bold;">5</div><div class="a t" style="left:1342px;top:331px;font-size:13px;color:#9ad2ff;width:51px;text-align:right;font-weight:bold;">6</div><div class="a t" style="left:1342px;top:351px;font-size:13px;color:#9ad2ff;width:51px;text-align:right;font-weight:bold;">7</div><div class="a t" style="left:1342px;top:371px;font-size:13px;color:#9ad2ff;width:51px;text-align:right;font-weight:bold;">8</div><div class="a t" style="left:1342px;top:391px;font-size:13px;color:#9ad2ff;width:51px;text-align:right;font-weight:bold;">9</div><div class="a t" style="left:1342px;top:411px;font-size:13px;color:#9ad2ff;width:51px;text-align:right;font-weight:bold;">10</div><div class="a t" style="left:1342px;top:431px;font-size:13px;color:#9ad2ff;width:51px;text-align:right;font-weight:bold;">11</div><div class="a t" style="left:1342px;top:451px;font-size:13px;color:#9ad2ff;width:51px;text-align:right;font-weight:bold;">12</div><div class="a t" style="left:1342px;top:471px;font-size:13px;color:#9ad2ff;width:51px;text-align:right;font-weight:bold;">13</div><div class="a t" style="left:1342px;top:491px;font-size:13px;color:#9ad2ff;width:51px;text-align:right;font-weight:bold;">14</div><div class="a t" style="left:1342px;top:511px;font-size:13px;color:#9ad2ff;width:51px;text-align:right;font-weight:bold;">15</div><div class="a t" style="left:1342px;top:531px;font-size:13px;color:#9ad2ff;width:51px;text-align:right;font-weight:bold;">16</div><div class="a t" style="left:1342px;top:551px;font-size:13px;color:#9ad2ff;width:51px;text-align:right;font-weight:bold;">17</div><div class="a t" style="left:1342px;top:571px;font-size:13px;color:#9ad2ff;width:51px;text-align:right;font-weight:bold;">18</div><div class="a t" style="left:1342px;top:591px;font-size:13px;color:#9ad2ff;width:51px;text-align:right;font-weight:bold;">19</div><div class="a t" style="left:1342px;top:611px;font-size:13px;color:#9ad2ff;width:51px;text-align:right;font-weight:bold;">20</div><div class="a t" style="left:1342px;top:631px;font-size:13px;color:#9ad2ff;width:51px;text-align:right;font-weight:bold;">21</div><div class="a t" style="left:1342px;top:651px;font-size:13px;color:#9ad2ff;width:51px;text-align:right;font-weight:bold;">22</div><div class="a t" style="left:1342px;top:671px;font-size:13px;color:#9ad2ff;width:51px;text-align:right;font-weight:bold;">23</div><div class="a t" style="left:1342px;top:691px;font-size:13px;color:#9ad2ff;width:51px;text-align:right;font-weight:bold;">24</div><div class="a t" style="left:1342px;top:711px;font-size:13px;color:#9ad2ff;width:51px;text-align:right;font-weight:bold;">25</div><div class="a t" style="left:1342px;top:731px;font-size:13px;color:#9ad2ff;width:51px;text-align:right;font-weight:bold;">26</div><div class="a t" style="left:1342px;top:751px;font-size:13px;color:#9ad2ff;width:51px;text-align:right;font-weight:bold;">27</div><div class="a t" style="left:1342px;top:771px;font-size:13px;color:#9ad2ff;width:51px;text-align:right;font-weight:bold;">28</div><div class="a t" style="left:1342px;top:791px;font-size:13px;color:#9ad2ff;width:51px;text-align:right;font-weight:bold;">29</div><div class="a t" style="left:1342px;top:811px;font-size:13px;color:#9ad2ff;width:51px;text-align:right;font-weight:bold;">30</div><div class="a t" style="left:1342px;top:831px;font-size:13px;color:#9ad2ff;width:51px;text-align:right;font-weight:bold;">31</div><div class="a t" style="left:1342px;top:851px;font-size:13px;color:#9ad2ff;width:51px;text-align:right;font-weight:bold;">32</div><div class="a t" style="left:1342px;top:871px;font-size:13px;color:#9ad2ff;width:51px;text-align:right;font-weight:bold;">33</div><div class="a t" style="left:1342px;top:891px;font-size:13px;color:#9ad2ff;width:51px;text-align:right;font-weight:bold;">34</div><div class="a t" style="left:1342px;top:911px;font-size:13px;color:#9ad2ff;width:51px;text-align:right;font-weight:bold;">35</div><div class="a t" style="left:1342px;top:931px;font-size:13px;color:#9ad2ff;width:51px;text-align:right;font-weight:bold;">36</div><div class="a t" style="left:1342px;top:951px;font-size:13px;color:#9ad2ff;width:51px;text-align:right;font-weight:bold;">37</div><div class="a t" style="left:1342px;top:971px;font-size:13px;color:#9ad2ff;width:51px;text-align:right;font-weight:bold;">38</div><div class="a t" style="left:1342px;top:991px;font-size:13px;color:#9ad2ff;width:51px;text-align:right;font-weight:bold;">39</div><div class="a t" style="left:1342px;top:1011px;font-size:13px;color:#9ad2ff;width:51px;text-align:right;font-weight:bold;">40</div><svg class="a" style="left:1334px;top:228px;" width="22" height="20" viewBox="0 0 22 20"><path d="M1 10A10 9.5 0 0 1 21 10Z" fill="#a82a3c" stroke="#ff2020" stroke-width="1.2"/><path d="M1 10A10 9.5 0 0 0 21 10Z" fill="#2ea22e" stroke="#20ff20" stroke-width="1.2"/></svg><svg class="a" style="left:1358px;top:229px;" width="12" height="12" viewBox="0 0 12 12"><path d="M0 0H12L0 12Z" fill="#999" stroke="#111" stroke-width="1"/></svg><div class="a" style="left:1724px;top:408px;width:73px;height:19px;background:#cdcdcd;"></div><svg class="a" style="left:1724px;top:408px;" width="6" height="19" viewBox="0 0 6 19"><path d="M0 0H5V14L0 19Z" fill="#8a8a8a"/></svg><div class="a t" style="left:1731px;top:414px;font-size:12px;color:#111;">start here</div><svg class="a" style="left:1724px;top:428px;" width="73" height="19" viewBox="0 0 73 19"><path d="M0 1L73 18M0 18L73 1" stroke="#8a8a8a" stroke-width="0.8"/></svg><div class="a" style="left:1724px;top:688px;width:73px;height:19px;background:#cdcdcd;"></div><svg class="a" style="left:1724px;top:688px;" width="6" height="19" viewBox="0 0 6 19"><path d="M0 0H5V14L0 19Z" fill="#8a8a8a"/></svg><div class="a t" style="left:1731px;top:694px;font-size:12px;color:#111;">1 goes out</div><svg class="a" style="left:1724px;top:708px;" width="73" height="19" viewBox="0 0 73 19"><path d="M0 1L73 18M0 18L73 1" stroke="#8a8a8a" stroke-width="0.8"/></svg><div class="a" style="left:1724px;top:868px;width:73px;height:19px;background:#cdcdcd;"></div><svg class="a" style="left:1724px;top:868px;" width="6" height="19" viewBox="0 0 6 19"><path d="M0 0H5V14L0 19Z" fill="#8a8a8a"/></svg><div class="a t" style="left:1731px;top:874px;font-size:12px;color:#111;">scream</div><svg class="a" style="left:1724px;top:888px;" width="73" height="19" viewBox="0 0 73 19"><path d="M0 1L73 18M0 18L73 1" stroke="#8a8a8a" stroke-width="0.8"/></svg><div class="a" style="left:1724px;top:988px;width:73px;height:19px;background:#cdcdcd;"></div><svg class="a" style="left:1724px;top:988px;" width="6" height="19" viewBox="0 0 6 19"><path d="M0 0H5V14L0 19Z" fill="#8a8a8a"/></svg><div class="a t" style="left:1731px;top:994px;font-size:12px;color:#111;">jump</div><svg class="a" style="left:1724px;top:1008px;" width="73" height="19" viewBox="0 0 73 19"><path d="M0 1L73 18M0 18L73 1" stroke="#8a8a8a" stroke-width="0.8"/></svg><svg class="a" style="left:1615px;top:485px;" width="72" height="18" viewBox="0 0 72 18"><path d="M0.5 6.5L6.5 0.5H71.5V17.5H0.5Z" fill="#fbe38c" stroke="#000"/><path d="M0.5 6.5H6.5V0.5" fill="#e8c860" stroke="#000"/></svg><div class="a t" style="left:1627px;top:489px;font-size:12px;color:#111;">review!!</div><div class="a" style="left:1904px;top:228px;width:16px;height:796px;background:#343434;"></div><svg class="a" style="left:1907px;top:232px;" width="10" height="6" viewBox="0 0 10 6"><path d="M0 6H10L5 0Z" fill="#cfcfcf"/></svg><div class="a" style="left:1907px;top:243px;width:10px;height:22px;background:#5a5a5a;border-radius:5px;"></div><svg class="a" style="left:1907px;top:1013px;" width="10" height="6" viewBox="0 0 10 6"><path d="M0 0H10L5 6Z" fill="#cfcfcf"/></svg><div class="a" style="left:1331px;top:1024px;width:74px;height:16px;background:#484848;"></div><div class="a" style="left:1405px;top:1024px;width:515px;height:16px;background:#333333;"></div><svg class="a" style="left:1410px;top:1027px;" width="6" height="10" viewBox="0 0 6 10"><path d="M6 0V10L0 5Z" fill="#bbb"/></svg><div class="a" style="left:1421px;top:1027px;width:467px;height:10px;background:#555555;border-radius:5px;"></div><svg class="a" style="left:1893px;top:1027px;" width="6" height="10" viewBox="0 0 6 10"><path d="M0 0V10L6 5Z" fill="#ddd"/></svg>
<div class="a" style="left:39px;top:746px;width:256px;height:20px;background:#393939;border-bottom:1px solid #2e2e2e;"></div><div class="a t" style="left:49px;top:751px;font-size:12px;color:#b4b4b4;">Studio Palette</div><div class="a" style="left:39px;top:766px;width:256px;height:146px;background:#333333;"></div><div class="a" style="left:39px;top:766px;width:256px;height:19px;background:#3a3a3a;"></div><svg class="a" style="left:44px;top:772px;" width="6" height="8" viewBox="0 0 6 8"><path d="M0 0V8L6 4Z" fill="#cfcfcf"/></svg><svg class="a" style="left:59px;top:771px;" width="15" height="12" viewBox="0 0 15 12"><path d="M0 1H5L6 2.5H15V12H0Z" fill="#fcad1c"/></svg><svg class="a" style="left:59px;top:790px;" width="15" height="12" viewBox="0 0 15 12"><path d="M0 1H5L6 2.5H15V12H0Z" fill="#fcad1c"/></svg><div class="a t" style="left:83px;top:771px;font-size:12px;color:#ececec;">Global Palettes</div><div class="a t" style="left:83px;top:790px;font-size:12px;color:#ececec;">Project Palettes</div><div class="a" style="left:39px;top:912px;width:256px;height:3px;background:#222;"></div><div class="a" style="left:39px;top:915px;width:256px;height:23px;background:#3c3c3c;border-bottom:1px solid #2e2e2e;"></div><div class="a" style="left:165px;top:915px;width:130px;height:22px;background:#454545;"></div><svg class="a" style="left:171px;top:919px;" width="14" height="14" viewBox="0 0 14 14"><path d="M0.5 0.5H10.5L13.5 3.5V13.5H0.5Z" fill="#cfcfcf"/><rect x="3" y="1" width="7" height="4" fill="#454545"/><rect x="3" y="8" width="8" height="5" fill="#454545"/></svg><div class="a" style="left:190px;top:915px;width:1px;height:22px;background:#333;"></div><svg class="a" style="left:197px;top:920px;" width="10" height="12" viewBox="0 0 10 12"><path d="M9 0.5V11.5L0.5 6Z" fill="none" stroke="#777"/></svg><div class="a" style="left:215px;top:918px;width:16px;height:17px;background:#7a7a7a;"></div><svg class="a" style="left:218px;top:920px;" width="10" height="13" viewBox="0 0 10 13"><circle cx="5" cy="3.5" r="2.8" fill="none" stroke="#ddd" stroke-width="1.6"/><path d="M5 6V12M5 9H7.5" stroke="#ddd" stroke-width="1.6"/></svg><svg class="a" style="left:239px;top:920px;" width="10" height="12" viewBox="0 0 10 12"><path d="M1 0.5V11.5L9.5 6Z" fill="none" stroke="#777"/></svg><div class="a" style="left:255px;top:915px;width:1px;height:22px;background:#333;"></div><svg class="a" style="left:262px;top:921px;" width="14" height="10" viewBox="0 0 14 10"><path d="M3 0H14V10H0V3Z" fill="#eee"/><path d="M0 3H3V0Z" fill="#777"/></svg><div class="a" style="left:279px;top:915px;width:16px;height:22px;background:#6a6a6a;"></div><svg class="a" style="left:284px;top:922px;" width="5" height="8" viewBox="0 0 5 8"><path d="M0 0V8L5 4Z" fill="#ddd"/></svg><div class="a" style="left:39px;top:938px;width:256px;height:102px;background:#4a4a4a;"></div><div class="a t" style="left:44px;top:954px;font-size:12px;color:#e8e8e8;">- No Styles -</div><div class="a" style="left:279px;top:938px;width:16px;height:102px;background:#343434;"></div><svg class="a" style="left:282px;top:944px;" width="9" height="5" viewBox="0 0 9 5"><path d="M0 5H9L4.5 0Z" fill="#cfcfcf"/></svg><div class="a" style="left:282px;top:954px;width:10px;height:22px;background:#585858;border-radius:5px;"></div><svg class="a" style="left:282px;top:1030px;" width="9" height="5" viewBox="0 0 9 5"><path d="M0 0H9L4.5 5Z" fill="#cfcfcf"/></svg>
<div class="a" style="left:299px;top:746px;width:399px;height:20px;background:#393939;border-bottom:1px solid #2e2e2e;"></div><div class="a t" style="left:309px;top:751px;font-size:12px;color:#b4b4b4;letter-spacing:-0.3px;">Level Palette: B *</div><div class="a" style="left:643px;top:748px;width:18px;height:16px;background:#f0c800;"></div><svg class="a" style="left:646px;top:750px;" width="12" height="12" viewBox="0 0 12 12"><path d="M3.5 3A4.3 4.3 0 1 0 8.5 3" fill="none" stroke="#222" stroke-width="1.4"/><path d="M6 0.5V6" stroke="#222" stroke-width="1.4"/></svg><div class="a" style="left:299px;top:766px;width:399px;height:22px;background:#3a3a3a;border-bottom:1px solid #2e2e2e;"></div><div class="a" style="left:299px;top:766px;width:120px;height:22px;background:#4a4a4a;"></div><svg class="a" style="left:307px;top:772px;" width="12" height="10" viewBox="0 0 12 10"><rect x="0" y="0.0" width="2" height="2" fill="#ddd"/><rect x="0" y="3.3" width="2" height="2" fill="#ddd"/><rect x="0" y="6.6" width="2" height="2" fill="#ddd"/><rect x="3" y="0.0" width="2" height="2" fill="#ddd"/><rect x="3" y="3.3" width="2" height="2" fill="#ddd"/><rect x="3" y="6.6" width="2" height="2" fill="#ddd"/><rect x="6" y="0.0" width="2" height="2" fill="#ddd"/><rect x="6" y="3.3" width="2" height="2" fill="#ddd"/><rect x="6" y="6.6" width="2" height="2" fill="#ddd"/><rect x="9" y="0.0" width="2" height="2" fill="#ddd"/><rect x="9" y="3.3" width="2" height="2" fill="#ddd"/><rect x="9" y="6.6" width="2" height="2" fill="#ddd"/></svg><div class="a t" style="left:354px;top:772px;font-size:12px;color:#e8e8e8;">colors</div><div class="a" style="left:446px;top:766px;width:252px;height:22px;background:#454545;"></div><div class="a" style="left:476px;top:767px;width:1px;height:21px;background:#333;"></div><div class="a" style="left:527px;top:767px;width:1px;height:21px;background:#333;"></div><div class="a" style="left:591px;top:767px;width:1px;height:21px;background:#333;"></div><div class="a" style="left:644px;top:767px;width:1px;height:21px;background:#333;"></div><svg class="a" style="left:453px;top:771px;" width="16" height="12" viewBox="0 0 16 12"><rect x="0" y="2.0" width="2" height="2" fill="#ddd"/><rect x="0" y="5.3" width="2" height="2" fill="#ddd"/><rect x="0" y="8.6" width="2" height="2" fill="#ddd"/><rect x="3" y="2.0" width="2" height="2" fill="#ddd"/><rect x="3" y="5.3" width="2" height="2" fill="#ddd"/><rect x="3" y="8.6" width="2" height="2" fill="#ddd"/><rect x="6" y="2.0" width="2" height="2" fill="#ddd"/><rect x="6" y="5.3" width="2" height="2" fill="#ddd"/><rect x="6" y="8.6" width="2" height="2" fill="#ddd"/><rect x="9" y="2.0" width="2" height="2" fill="#ddd"/><rect x="9" y="5.3" width="2" height="2" fill="#ddd"/><rect x="9" y="8.6" width="2" height="2" fill="#ddd"/><path d="M12 0H16V4M16 0L12 4" stroke="#ddd" stroke-width="1.2" fill="none"/></svg><svg class="a" style="left:482px;top:770px;" width="15" height="15" viewBox="0 0 15 15"><path d="M0.5 2.5V14.5H12.5" fill="none" stroke="#ddd" stroke-width="1.5"/><path d="M0.5 2.5H6M3 2.5V8" stroke="#ddd" stroke-width="1.5"/><path d="M5 12L13 1L15 3L7 14Z" fill="#ddd"/></svg><svg class="a" style="left:507px;top:770px;" width="14" height="15" viewBox="0 0 14 15"><path d="M0.5 0.5H10.5L13.5 3.5V14.5H0.5Z" fill="#ddd"/><rect x="3" y="1" width="7" height="4" fill="#454545"/><rect x="3" y="8" width="8" height="6" fill="#454545"/></svg><svg class="a" style="left:533px;top:772px;" width="9" height="11" viewBox="0 0 9 11"><path d="M8.5 0.5V10.5L0.5 5.5Z" fill="none" stroke="#777"/></svg><div class="a" style="left:551px;top:769px;width:16px;height:17px;background:#7a7a7a;"></div><svg class="a" style="left:554px;top:771px;" width="10" height="13" viewBox="0 0 10 13"><circle cx="5" cy="3.5" r="2.8" fill="none" stroke="#ddd" stroke-width="1.6"/><path d="M5 6V12M5 9H7.5" stroke="#ddd" stroke-width="1.6"/></svg><svg class="a" style="left:575px;top:772px;" width="9" height="11" viewBox="0 0 9 11"><path d="M0.5 0.5V10.5L8.5 5.5Z" fill="none" stroke="#777"/></svg><svg class="a" style="left:599px;top:772px;" width="13" height="10" viewBox="0 0 13 10"><path d="M3 0H13V9H0V3Z" fill="#eee"/><path d="M0 3H3V0Z" fill="#777"/></svg><svg class="a" style="left:625px;top:771px;" width="13" height="11" viewBox="0 0 13 11"><path d="M4 0H13V8H1V4Z" fill="#ccc"/><path d="M3 2H12V10H0V5Z" fill="#eee"/></svg><svg class="a" style="left:651px;top:771px;" width="14" height="14" viewBox="0 0 14 14"><path d="M0 1H12M0 5H12M0 9H8" stroke="#eee" stroke-width="2"/><path d="M9 9H14L11.5 13Z" fill="#eee"/></svg><svg class="a" style="left:678px;top:769px;" width="14" height="16" viewBox="0 0 14 16"><path d="M7 7V4A3 3 0 0 1 13 4V6" fill="none" stroke="#eee" stroke-width="1.4"/><rect x="1" y="7" width="9" height="8" fill="#eee"/><rect x="5" y="9" width="1.6" height="3" fill="#454545"/></svg><div class="a" style="left:299px;top:788px;width:399px;height:252px;background:#4a4a4a;"></div><div class="a" style="left:300px;top:790px;width:198px;height:39px;border:2px solid #8a8a8a;"></div><div class="a" style="left:305px;top:795px;width:89px;height:30px;background:#ffffff;"></div><div class="a t" style="left:304px;top:804px;font-size:12px;color:#111;width:89px;text-align:center;letter-spacing:-0.3px;">color_0</div><div class="a" style="left:382px;top:809px;width:12px;height:16px;background:#ffffff;border:1px solid #000;"></div><div class="a t" style="left:384px;top:812px;font-size:12px;color:#000;">0</div><svg class="a" style="left:305px;top:818px;" width="75" height="7" viewBox="0 0 75 7"><rect x="6" y="0" width="6" height="7" fill="#000"/><rect x="18" y="0" width="6" height="7" fill="#000"/><rect x="30" y="0" width="6" height="7" fill="#000"/><rect x="42" y="0" width="6" height="7" fill="#000"/><rect x="54" y="0" width="6" height="7" fill="#000"/><rect x="66" y="0" width="6" height="7" fill="#000"/></svg><div class="a" style="left:403px;top:795px;width:90px;height:30px;background:#000000;"></div><div class="a t" style="left:402px;top:804px;font-size:12px;color:#f0f0f0;width:90px;text-align:center;letter-spacing:-0.3px;">color_1</div><div class="a" style="left:481px;top:809px;width:12px;height:16px;background:#ffffff;border:1px solid #000;"></div><div class="a t" style="left:483px;top:812px;font-size:12px;color:#000;">1</div><div class="a" style="left:497px;top:790px;width:98px;height:40px;background:#ffffff;border-radius:3px;"></div><div class="a" style="left:501px;top:795px;width:90px;height:30px;background:#ebe39a;border:1px solid #000;"></div><div class="a" style="left:505px;top:798px;width:83px;height:24px;border:1px solid #000;"></div><div class="a t" style="left:502px;top:804px;font-size:12px;color:#111;width:86px;text-align:center;letter-spacing:-0.3px;">color_2</div><div class="a" style="left:579px;top:809px;width:12px;height:16px;background:#ffffff;border:1px solid #000;"></div><div class="a t" style="left:581px;top:812px;font-size:12px;color:#000;">2</div><svg class="a" style="left:341px;top:794px;" width="16" height="9" viewBox="0 0 16 9"><path d="M0 0H16C16 5 12 8 8 8C4 8 0 5 0 0Z" fill="#8c8c8c" stroke="#333" stroke-width="0.6"/></svg><div class="a t" style="left:347px;top:795px;font-size:7px;color:#444;">1</div><svg class="a" style="left:439px;top:794px;" width="16" height="9" viewBox="0 0 16 9"><path d="M0 0H16C16 5 12 8 8 8C4 8 0 5 0 0Z" fill="#8c8c8c" stroke="#333" stroke-width="0.6"/></svg><div class="a t" style="left:445px;top:795px;font-size:7px;color:#444;">2</div><svg class="a" style="left:537px;top:794px;" width="16" height="9" viewBox="0 0 16 9"><path d="M0 0H16C16 5 12 8 8 8C4 8 0 5 0 0Z" fill="#8c8c8c" stroke="#333" stroke-width="0.6"/></svg><div class="a t" style="left:543px;top:795px;font-size:7px;color:#444;">3</div><div class="a" style="left:682px;top:791px;width:16px;height:249px;background:#363636;"></div><svg class="a" style="left:685px;top:796px;" width="9" height="5" viewBox="0 0 9 5"><path d="M0 5H9L4.5 0Z" fill="#cfcfcf"/></svg><div class="a" style="left:685px;top:806px;width:10px;height:218px;background:#525252;border-radius:5px;"></div><svg class="a" style="left:685px;top:1029px;" width="9" height="5" viewBox="0 0 9 5"><path d="M0 0H9L4.5 5Z" fill="#cfcfcf"/></svg>
<div class="a" style="left:702px;top:746px;width:412px;height:20px;background:#393939;border-bottom:1px solid #2e2e2e;"></div><div class="a t" style="left:712px;top:751px;font-size:12px;color:#b4b4b4;letter-spacing:-0.25px;">[LEVEL]&nbsp; Palette : B | #2 : color_2</div><div class="a" style="left:702px;top:767px;width:412px;height:21px;background:#3a3a3a;border-bottom:1px solid #2e2e2e;"></div><div class="a" style="left:702px;top:767px;width:38px;height:22px;background:#4a4a4a;border-right:1px solid #2e2e2e;"></div><div class="a t" style="left:702px;top:772px;font-size:12px;color:#f0f0f0;width:38px;text-align:center;">Color</div><div class="a" style="left:740px;top:767px;width:47px;height:21px;background:#3e3e3e;border-right:1px solid #2e2e2e;"></div><div class="a t" style="left:740px;top:772px;font-size:12px;color:#b4b4b4;width:47px;text-align:center;">Texture</div><div class="a" style="left:787px;top:767px;width:42px;height:21px;background:#3e3e3e;border-right:1px solid #2e2e2e;"></div><div class="a t" style="left:787px;top:772px;font-size:12px;color:#b4b4b4;width:42px;text-align:center;">Vector</div><div class="a" style="left:829px;top:767px;width:41px;height:21px;background:#3e3e3e;border-right:1px solid #2e2e2e;"></div><div class="a t" style="left:829px;top:772px;font-size:12px;color:#b4b4b4;width:41px;text-align:center;">Raster</div><div class="a" style="left:870px;top:767px;width:51px;height:21px;background:#3e3e3e;border-right:1px solid #2e2e2e;"></div><div class="a t" style="left:870px;top:772px;font-size:12px;color:#b4b4b4;width:51px;text-align:center;">Settings</div><div class="a" style="left:702px;top:788px;width:412px;height:252px;background:#4a4a4a;"></div><div class="a" style="left:908px;top:788px;width:3px;height:191px;background:#333;"></div><div class="a" style="left:911px;top:872px;width:203px;height:2px;background:#333;"></div><div class="a" style="left:911px;top:903px;width:203px;height:2px;background:#333;"></div><div class="a" style="left:702px;top:978px;width:412px;height:1px;background:#333;"></div><svg class="a" style="left:0px;top:0px;" width="1920" height="1040" viewBox="0 0 1920 1040"><defs><linearGradient id="g0" gradientUnits="userSpaceOnUse" x1="858.0" y1="886.8" x2="820.1999999999999" y2="952.2715205261035"><stop offset="0" stop-color="#ff0000"/><stop offset="1" stop-color="#ff00ff"/></linearGradient><linearGradient id="g1" gradientUnits="userSpaceOnUse" x1="820.1999999999999" y1="952.2715205261035" x2="744.6" y2="952.2715205261035"><stop offset="0" stop-color="#ff00ff"/><stop offset="1" stop-color="#0000ff"/></linearGradient><linearGradient id="g2" gradientUnits="userSpaceOnUse" x1="744.6" y1="952.2715205261035" x2="706.8" y2="886.8"><stop offset="0" stop-color="#0000ff"/><stop offset="1" stop-color="#00ffff"/></linearGradient><linearGradient id="g3" gradientUnits="userSpaceOnUse" x1="706.8" y1="886.8" x2="744.5999999999999" y2="821.3284794738964"><stop offset="0" stop-color="#00ffff"/><stop offset="1" stop-color="#00ff00"/></linearGradient><linearGradient id="g4" gradientUnits="userSpaceOnUse" x1="744.5999999999999" y1="821.3284794738964" x2="820.1999999999999" y2="821.3284794738964"><stop offset="0" stop-color="#00ff00"/><stop offset="1" stop-color="#ffff00"/></linearGradient><linearGradient id="g5" gradientUnits="userSpaceOnUse" x1="820.1999999999999" y1="821.3284794738964" x2="858.0" y2="886.8"><stop offset="0" stop-color="#ffff00"/><stop offset="1" stop-color="#ff0000"/></linearGradient><radialGradient id="rw" gradientUnits="userSpaceOnUse" cx="782.4" cy="886.8" r="75.6"><stop offset="0" stop-color="#e8e8e8" stop-opacity="0.95"/><stop offset="0.5" stop-color="#e8e8e8" stop-opacity="0.38"/><stop offset="0.9" stop-color="#e8e8e8" stop-opacity="0"/></radialGradient><linearGradient id="tri1" x1="0" y1="0" x2="1" y2="0"><stop offset="0" stop-color="#f5dc00"/><stop offset="1" stop-color="#ffffff"/></linearGradient><linearGradient id="tri2" x1="0" y1="0" x2="0" y2="1"><stop offset="0" stop-color="#000" stop-opacity="0"/><stop offset="1" stop-color="#000" stop-opacity="1"/></linearGradient></defs><path d="M782.4 886.8L858.0 886.8L820.2 952.3Z" fill="url(#g0)" stroke="url(#g0)" stroke-width="0.5"/><path d="M782.4 886.8L820.2 952.3L744.6 952.3Z" fill="url(#g1)" stroke="url(#g1)" stroke-width="0.5"/><path d="M782.4 886.8L744.6 952.3L706.8 886.8Z" fill="url(#g2)" stroke="url(#g2)" stroke-width="0.5"/><path d="M782.4 886.8L706.8 886.8L744.6 821.3Z" fill="url(#g3)" stroke="url(#g3)" stroke-width="0.5"/><path d="M782.4 886.8L744.6 821.3L820.2 821.3Z" fill="url(#g4)" stroke="url(#g4)" stroke-width="0.5"/><path d="M782.4 886.8L820.2 821.3L858.0 886.8Z" fill="url(#g5)" stroke="url(#g5)" stroke-width="0.5"/><path d="M858.0 886.8L820.2 952.3L744.6 952.3L706.8 886.8L744.6 821.3L820.2 821.3Z" fill="url(#rw)"/><path d="M826 822H901V952Z" fill="url(#tri1)"/><path d="M826 822H901V952Z" fill="url(#tri2)"/><rect x="792" y="863" width="8" height="8" fill="none" stroke="#111" stroke-width="1.2"/><rect x="873" y="828" width="8" height="8" fill="none" stroke="#111" stroke-width="1.2"/></svg><div class="a t" style="left:914px;top:799px;font-size:12px;color:#e8e8e8;">H</div><div class="a" style="left:928px;top:795px;width:47px;height:18px;background:#2e2e2e;border-radius:2px;"></div><div class="a t" style="left:932px;top:799px;font-size:12px;color:#e8e8e8;">54</div><svg class="a" style="left:986px;top:801px;" width="5" height="7" viewBox="0 0 5 7"><path d="M5 0V7L0 3.5Z" fill="#cfcfcf"/></svg><svg class="a" style="left:1097px;top:801px;" width="5" height="7" viewBox="0 0 5 7"><path d="M0 0V7L5 3.5Z" fill="#cfcfcf"/></svg><div class="a" style="left:1001px;top:794px;width:86px;height:17px;background:linear-gradient(90deg,#eba2a2,#ebe3a2,#a2eba2,#a2ebeb,#a2a2eb,#eba2eb,#eba2a2);border-bottom:1px solid #eee;"></div><div class="a" style="left:1017px;top:794px;width:2px;height:18px;background:#111;"></div><div class="a" style="left:1016px;top:811px;width:6px;height:3px;background:#eee;border:1px solid #333;"></div><div class="a t" style="left:914px;top:825px;font-size:12px;color:#e8e8e8;">S</div><div class="a" style="left:928px;top:821px;width:47px;height:18px;background:#2e2e2e;border-radius:2px;"></div><div class="a t" style="left:932px;top:825px;font-size:12px;color:#e8e8e8;">34</div><svg class="a" style="left:986px;top:827px;" width="5" height="7" viewBox="0 0 5 7"><path d="M5 0V7L0 3.5Z" fill="#cfcfcf"/></svg><svg class="a" style="left:1097px;top:827px;" width="5" height="7" viewBox="0 0 5 7"><path d="M0 0V7L5 3.5Z" fill="#cfcfcf"/></svg><div class="a" style="left:1001px;top:820px;width:86px;height:17px;background:linear-gradient(90deg,#ebebeb,#ebd600);border-bottom:1px solid #eee;"></div><div class="a" style="left:1032px;top:820px;width:2px;height:18px;background:#111;"></div><div class="a" style="left:1031px;top:837px;width:6px;height:3px;background:#eee;border:1px solid #333;"></div><div class="a t" style="left:914px;top:851px;font-size:12px;color:#e8e8e8;">V</div><div class="a" style="left:928px;top:847px;width:47px;height:18px;background:#2e2e2e;border-radius:2px;"></div><div class="a t" style="left:932px;top:851px;font-size:12px;color:#e8e8e8;">92</div><svg class="a" style="left:986px;top:853px;" width="5" height="7" viewBox="0 0 5 7"><path d="M5 0V7L0 3.5Z" fill="#cfcfcf"/></svg><svg class="a" style="left:1097px;top:853px;" width="5" height="7" viewBox="0 0 5 7"><path d="M0 0V7L5 3.5Z" fill="#cfcfcf"/></svg><div class="a" style="left:1001px;top:846px;width:86px;height:17px;background:linear-gradient(90deg,#000,#ebe39a);border-bottom:1px solid #eee;"></div><div class="a" style="left:1077px;top:846px;width:2px;height:18px;background:#111;"></div><div class="a" style="left:1076px;top:863px;width:6px;height:3px;background:#eee;border:1px solid #333;"></div><div class="a t" style="left:914px;top:882px;font-size:12px;color:#e8e8e8;">A</div><div class="a" style="left:928px;top:878px;width:47px;height:18px;background:#2e2e2e;border-radius:2px;"></div><div class="a t" style="left:932px;top:882px;font-size:12px;color:#e8e8e8;">255</div><svg class="a" style="left:986px;top:884px;" width="5" height="7" viewBox="0 0 5 7"><path d="M5 0V7L0 3.5Z" fill="#cfcfcf"/></svg><svg class="a" style="left:1097px;top:884px;" width="5" height="7" viewBox="0 0 5 7"><path d="M0 0V7L5 3.5Z" fill="#cfcfcf"/></svg><div class="a" style="left:1001px;top:877px;width:86px;height:17px;background:linear-gradient(90deg,#000,#fff);border-bottom:1px solid #eee;"></div><div class="a" style="left:1084px;top:877px;width:2px;height:18px;background:#111;"></div><div class="a" style="left:1083px;top:894px;width:6px;height:3px;background:#eee;border:1px solid #333;"></div><div class="a t" style="left:914px;top:913px;font-size:12px;color:#e8e8e8;">R</div><div class="a" style="left:928px;top:909px;width:47px;height:18px;background:#2e2e2e;border-radius:2px;"></div><div class="a t" style="left:932px;top:913px;font-size:12px;color:#e8e8e8;">237</div><svg class="a" style="left:986px;top:915px;" width="5" height="7" viewBox="0 0 5 7"><path d="M5 0V7L0 3.5Z" fill="#cfcfcf"/></svg><svg class="a" style="left:1097px;top:915px;" width="5" height="7" viewBox="0 0 5 7"><path d="M0 0V7L5 3.5Z" fill="#cfcfcf"/></svg><div class="a" style="left:1001px;top:908px;width:86px;height:17px;background:linear-gradient(90deg,#000,#ff0000);border-bottom:1px solid #eee;"></div><div class="a" style="left:1077px;top:908px;width:2px;height:18px;background:#111;"></div><div class="a" style="left:1076px;top:925px;width:6px;height:3px;background:#eee;border:1px solid #333;"></div><div class="a t" style="left:914px;top:939px;font-size:12px;color:#e8e8e8;">G</div><div class="a" style="left:928px;top:935px;width:47px;height:18px;background:#2e2e2e;border-radius:2px;"></div><div class="a t" style="left:932px;top:939px;font-size:12px;color:#e8e8e8;">229</div><svg class="a" style="left:986px;top:941px;" width="5" height="7" viewBox="0 0 5 7"><path d="M5 0V7L0 3.5Z" fill="#cfcfcf"/></svg><svg class="a" style="left:1097px;top:941px;" width="5" height="7" viewBox="0 0 5 7"><path d="M0 0V7L5 3.5Z" fill="#cfcfcf"/></svg><div class="a" style="left:1001px;top:934px;width:86px;height:17px;background:linear-gradient(90deg,#000,#00ff00);border-bottom:1px solid #eee;"></div><div class="a" style="left:1075px;top:934px;width:2px;height:18px;background:#111;"></div><div class="a" style="left:1074px;top:951px;width:6px;height:3px;background:#eee;border:1px solid #333;"></div><div class="a t" style="left:914px;top:965px;font-size:12px;color:#e8e8e8;">B</div><div class="a" style="left:928px;top:961px;width:47px;height:18px;background:#2e2e2e;border-radius:2px;"></div><div class="a t" style="left:932px;top:965px;font-size:12px;color:#e8e8e8;">154</div><svg class="a" style="left:986px;top:967px;" width="5" height="7" viewBox="0 0 5 7"><path d="M5 0V7L0 3.5Z" fill="#cfcfcf"/></svg><svg class="a" style="left:1097px;top:967px;" width="5" height="7" viewBox="0 0 5 7"><path d="M0 0V7L5 3.5Z" fill="#cfcfcf"/></svg><div class="a" style="left:1001px;top:960px;width:86px;height:17px;background:linear-gradient(90deg,#000,#0000ff);border-bottom:1px solid #eee;"></div><div class="a" style="left:1051px;top:960px;width:2px;height:18px;background:#111;"></div><div class="a" style="left:1050px;top:977px;width:6px;height:3px;background:#eee;border:1px solid #333;"></div><div class="a" style="left:706px;top:985px;width:38px;height:23px;background:#333333;border-radius:2px;"></div><div class="a t" style="left:712px;top:991px;font-size:12px;color:#f0f0f0;">Auto</div><div class="a" style="left:747px;top:986px;width:41px;height:21px;background:#525252;border-radius:2px;"></div><div class="a t" style="left:752px;top:991px;font-size:12px;color:#7a7a7a;">Apply</div><div class="a" style="left:792px;top:983px;width:320px;height:27px;background:#ebe39a;"></div><div class="a" style="left:1071px;top:1021px;width:17px;height:16px;background:#5c5c5c;border-radius:2px;"></div><svg class="a" style="left:1075px;top:1022px;" width="9" height="14" viewBox="0 0 9 14"><path d="M4.5 1V13M2 3.5L4.5 1L7 3.5M2 10.5L4.5 13L7 10.5" fill="none" stroke="#eee" stroke-width="1.3"/></svg><svg class="a" style="left:1091px;top:1022px;" width="14" height="12" viewBox="0 0 14 12"><path d="M0 1H13M0 4.5H13M0 8H13" stroke="#eee" stroke-width="2"/><path d="M8 9H14L11 12Z" fill="#eee"/></svg>
</body></html>
